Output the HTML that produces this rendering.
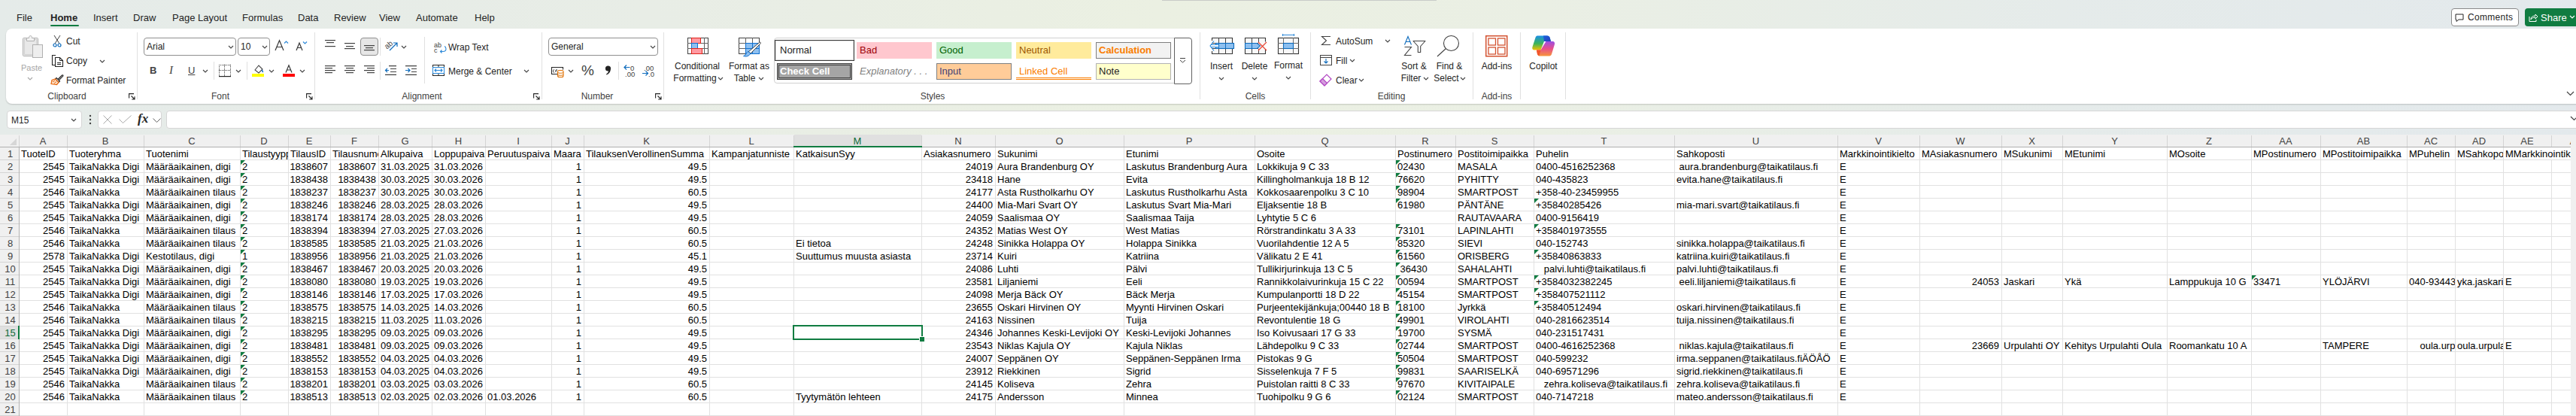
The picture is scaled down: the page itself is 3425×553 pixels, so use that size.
<!DOCTYPE html>
<html><head><meta charset="utf-8"><title>Excel</title>
<style>
html,body{margin:0;padding:0;}
body{width:3425px;height:553px;overflow:hidden;position:relative;font-family:"Liberation Sans", sans-serif;background:linear-gradient(90deg,#e5ebe9 0%,#e8ede6 25%,#ebf0e2 45%,#eaefe4 60%,#e5ebea 80%,#e3e9ec 100%);}
.t{position:absolute;white-space:pre;line-height:15px;}
.c{text-align:center;}
.b{position:absolute;}
.s{position:absolute;overflow:visible;}
.cl{position:absolute;height:16px;line-height:18px;font-size:13px;color:#000;white-space:pre;overflow:hidden;padding-left:2px;box-sizing:border-box;}
.cl.r{text-align:right;padding-left:0;}
.cl span{background:#fff;display:inline-block;height:16px;vertical-align:top;}
</style></head><body>

<div class="t" style="left:22px;top:16px;font-size:13px;color:#242424;font-weight:normal;">File</div><div class="t" style="left:67px;top:16px;font-size:13px;color:#242424;font-weight:bold;">Home</div><div class="t" style="left:124px;top:16px;font-size:13px;color:#242424;font-weight:normal;">Insert</div><div class="t" style="left:177px;top:16px;font-size:13px;color:#242424;font-weight:normal;">Draw</div><div class="t" style="left:229px;top:16px;font-size:13px;color:#242424;font-weight:normal;">Page Layout</div><div class="t" style="left:322px;top:16px;font-size:13px;color:#242424;font-weight:normal;">Formulas</div><div class="t" style="left:396px;top:16px;font-size:13px;color:#242424;font-weight:normal;">Data</div><div class="t" style="left:444px;top:16px;font-size:13px;color:#242424;font-weight:normal;">Review</div><div class="t" style="left:504px;top:16px;font-size:13px;color:#242424;font-weight:normal;">View</div><div class="t" style="left:553px;top:16px;font-size:13px;color:#242424;font-weight:normal;">Automate</div><div class="t" style="left:631px;top:16px;font-size:13px;color:#242424;font-weight:normal;">Help</div><div class="b" style="left:67px;top:33px;width:38px;height:2px;background:#107c41;border-radius:1px"></div><div class="b" style="left:1545px;top:0px;width:365px;height:1px;background:#c8cbc8"></div><div class="b" style="left:3259px;top:11px;width:90px;height:24px;background:#fff;border:1px solid #8a8a8a;border-radius:4px;box-sizing:border-box"></div><svg class="s" style="left:3264px;top:18px" width="12" height="11" viewBox="0 0 12 11"><path d="M1 1h10v7H5l-3 2.5V8H1z" fill="none" stroke="#242424" stroke-width="1"/></svg><div class="t" style="left:3281px;top:16px;font-size:12px;color:#242424;font-weight:normal;letter-spacing:0.3px;">Comments</div><div class="b" style="left:3357px;top:11px;width:80px;height:24px;background:#107c41;border-radius:4px"></div><svg class="s" style="left:3362px;top:17px" width="13" height="12" viewBox="0 0 13 12"><path d="M1 5v6.5h9V9" fill="none" stroke="#fff" stroke-width="1"/><path d="M3 9c0-3 2-5 6-5V2l3 3-3 3V6C6 6 4 7 3 9z" fill="none" stroke="#fff" stroke-width="1"/></svg><div class="t" style="left:3378px;top:16px;font-size:13px;color:#fff;font-weight:normal;">Share</div><svg class="s" style="left:3416px;top:20px" width="8" height="6" viewBox="0 0 8 6"><path d="M1 1l3 3 3-3" fill="none" stroke="#fff" stroke-width="1.2"/></svg><div class="b" style="left:8px;top:38px;width:3425px;height:100px;background:#fff;border-radius:8px;box-shadow:0 1px 2px rgba(0,0,0,0.18)"></div><svg class="s" style="left:30px;top:47px" width="28" height="31" viewBox="0 0 28 31"><rect x="0.5" y="3.5" width="20" height="24" rx="1" fill="#e8e8e8" stroke="#b0b0b0"/><rect x="2.5" y="5.5" width="16" height="20" fill="none" stroke="#d0d0d0"/><path d="M5.5 7.5v-4h3c0-2 1-3 2-3s2 1 2 3h3v4z" fill="#f2f2f2" stroke="#b0b0b0"/><rect x="13.5" y="12.5" width="13" height="17" fill="#eeeeee" stroke="#b0b0b0"/></svg><div class="t" style="left:28px;top:83px;font-size:11px;color:#a6a6a6;font-weight:normal;">Paste</div><svg class="s" style="left:36px;top:102px" width="8" height="5" viewBox="0 0 8 5"><path d="M1 1l3 3 3-3" fill="none" stroke="#a6a6a6" stroke-width="1.1"/></svg><svg class="s" style="left:70px;top:46px" width="12" height="17" viewBox="0 0 12 17"><path d="M2 1l7 11M10 1L3 12" fill="none" stroke="#424242" stroke-width="1"/><circle cx="3" cy="14" r="2" fill="none" stroke="#0f6cbd" stroke-width="1.2"/><circle cx="9" cy="14" r="2" fill="none" stroke="#0f6cbd" stroke-width="1.2"/></svg><div class="t" style="left:88px;top:48px;font-size:12px;color:#242424;font-weight:normal;">Cut</div><svg class="s" style="left:68px;top:72px" width="17" height="17" viewBox="0 0 17 17"><path d="M6 1.5H1.5v13H5" fill="none" stroke="#242424" stroke-width="1.1"/><path d="M5.5 4.5h6l4 4v8h-10z" fill="#fff" stroke="#242424" stroke-width="1.1"/><path d="M11.5 4.5v4h4" fill="none" stroke="#242424" stroke-width="1"/><path d="M8 11.5h5M8 13.5h5" stroke="#242424" stroke-width="1"/></svg><div class="t" style="left:88px;top:74px;font-size:12px;color:#242424;font-weight:normal;">Copy</div><svg class="s" style="left:132px;top:79px" width="8" height="5" viewBox="0 0 8 5"><path d="M1 1l3 3 3-3" fill="none" stroke="#424242" stroke-width="1.1"/></svg><svg class="s" style="left:67px;top:97px" width="18" height="16" viewBox="0 0 18 16"><path d="M10 8.5l5.5-5.5c0.8-0.8 2 0.4 1.2 1.2L11 10" fill="#fff" stroke="#242424" stroke-width="1.1"/><path d="M8 6.5l4.5 4.5-1.5 1.5L6.5 8z" fill="#fff" stroke="#242424" stroke-width="1.1"/><path d="M6.5 8l4.5 4.5-2.5 3L1 14.5l1-5z" fill="#fde3cc" stroke="#e8650a" stroke-width="1.2"/><path d="M3 12l3-2M5 14l3-2.5" stroke="#e8650a" stroke-width="1"/></svg><div class="t" style="left:88px;top:100px;font-size:12px;color:#242424;font-weight:normal;">Format Painter</div><div class="t c" style="left:29px;width:120px;top:121px;font-size:12px;color:#424242">Clipboard</div><svg class="s" style="left:171px;top:124px" width="9" height="9" viewBox="0 0 9 9"><path d="M0.6 6.5V0.6H7" fill="none" stroke="#242424" stroke-width="1.1"/><path d="M3.5 3.5l4.5 4.5M8 4.2V8H4.2" fill="none" stroke="#242424" stroke-width="1.1"/></svg><div class="b" style="left:182px;top:43px;width:1px;height:89px;background:#e0e0e0"></div><div class="b" style="left:191px;top:50px;width:123px;height:24px;border:1px solid #8f8f8f;border-radius:4px;box-sizing:border-box;background:#fff"></div><div class="t" style="left:195px;top:55px;font-size:12px;color:#242424;font-weight:normal;">Arial</div><svg class="s" style="left:303px;top:60px" width="8" height="5" viewBox="0 0 8 5"><path d="M1 1l3 3 3-3" fill="none" stroke="#424242" stroke-width="1.1"/></svg><div class="b" style="left:316px;top:50px;width:43px;height:24px;border:1px solid #8f8f8f;border-radius:4px;box-sizing:border-box;background:#fff"></div><div class="t" style="left:320px;top:55px;font-size:12px;color:#242424;font-weight:normal;">10</div><svg class="s" style="left:348px;top:60px" width="8" height="5" viewBox="0 0 8 5"><path d="M1 1l3 3 3-3" fill="none" stroke="#424242" stroke-width="1.1"/></svg><svg class="s" style="left:365px;top:53px" width="21" height="15" viewBox="0 0 21 15"><path d="M1 14L6.5 0.8 12 14M3 9.5h7" fill="none" stroke="#363636" stroke-width="1.2"/><path d="M13 4.5l2.5-2.5 2.5 2.5" fill="none" stroke="#2b88d8" stroke-width="1.2"/></svg><svg class="s" style="left:393px;top:54px" width="17" height="14" viewBox="0 0 17 14"><path d="M1 13L5 3 9 13M2.5 9.5h5" fill="none" stroke="#363636" stroke-width="1.2"/><path d="M10 1.5l2.5 2.5 2.5-2.5" fill="none" stroke="#2b88d8" stroke-width="1.2"/></svg><div class="t" style="left:199px;top:86px;font-size:13px;color:#424242;font-weight:bold;">B</div><div class="t" style="left:225px;top:86px;font-size:15px;color:#424242;font-weight:normal;font-style:italic;font-family:'Liberation Serif',serif;">I</div><div class="t" style="left:250px;top:86px;font-size:13px;color:#424242;font-weight:normal;text-decoration:underline;">U</div><svg class="s" style="left:269px;top:92px" width="8" height="5" viewBox="0 0 8 5"><path d="M1 1l3 3 3-3" fill="none" stroke="#424242" stroke-width="1.1"/></svg><div class="b" style="left:284px;top:82px;width:1px;height:24px;background:#e0e0e0"></div><svg class="s" style="left:291px;top:86px" width="16" height="16" viewBox="0 0 16 16"><rect x="0" y="0" width="1" height="1" fill="#424242"/><rect x="0" y="0" width="1" height="1" fill="#424242"/><rect x="15" y="0" width="1" height="1" fill="#424242"/><rect x="7" y="0" width="1" height="1" fill="#424242"/><rect x="0" y="7" width="1" height="1" fill="#424242"/><rect x="2" y="0" width="1" height="1" fill="#424242"/><rect x="0" y="2" width="1" height="1" fill="#424242"/><rect x="15" y="2" width="1" height="1" fill="#424242"/><rect x="7" y="2" width="1" height="1" fill="#424242"/><rect x="2" y="7" width="1" height="1" fill="#424242"/><rect x="4" y="0" width="1" height="1" fill="#424242"/><rect x="0" y="4" width="1" height="1" fill="#424242"/><rect x="15" y="4" width="1" height="1" fill="#424242"/><rect x="7" y="4" width="1" height="1" fill="#424242"/><rect x="4" y="7" width="1" height="1" fill="#424242"/><rect x="6" y="0" width="1" height="1" fill="#424242"/><rect x="0" y="6" width="1" height="1" fill="#424242"/><rect x="15" y="6" width="1" height="1" fill="#424242"/><rect x="7" y="6" width="1" height="1" fill="#424242"/><rect x="6" y="7" width="1" height="1" fill="#424242"/><rect x="8" y="0" width="1" height="1" fill="#424242"/><rect x="0" y="8" width="1" height="1" fill="#424242"/><rect x="15" y="8" width="1" height="1" fill="#424242"/><rect x="7" y="8" width="1" height="1" fill="#424242"/><rect x="8" y="7" width="1" height="1" fill="#424242"/><rect x="10" y="0" width="1" height="1" fill="#424242"/><rect x="0" y="10" width="1" height="1" fill="#424242"/><rect x="15" y="10" width="1" height="1" fill="#424242"/><rect x="7" y="10" width="1" height="1" fill="#424242"/><rect x="10" y="7" width="1" height="1" fill="#424242"/><rect x="12" y="0" width="1" height="1" fill="#424242"/><rect x="0" y="12" width="1" height="1" fill="#424242"/><rect x="15" y="12" width="1" height="1" fill="#424242"/><rect x="7" y="12" width="1" height="1" fill="#424242"/><rect x="12" y="7" width="1" height="1" fill="#424242"/><rect x="14" y="0" width="1" height="1" fill="#424242"/><rect x="0" y="14" width="1" height="1" fill="#424242"/><rect x="15" y="14" width="1" height="1" fill="#424242"/><rect x="7" y="14" width="1" height="1" fill="#424242"/><rect x="14" y="7" width="1" height="1" fill="#424242"/><rect x="0" y="15" width="16" height="1.2" fill="#242424"/></svg><svg class="s" style="left:313px;top:92px" width="8" height="5" viewBox="0 0 8 5"><path d="M1 1l3 3 3-3" fill="none" stroke="#424242" stroke-width="1.1"/></svg><div class="b" style="left:328px;top:82px;width:1px;height:24px;background:#e0e0e0"></div><svg class="s" style="left:335px;top:84px" width="17" height="19" viewBox="0 0 17 19"><path d="M4 9l5-6 5 5-5 5z" fill="none" stroke="#424242" stroke-width="1.1"/><path d="M13 9c1 1 2 2 1 3" fill="none" stroke="#0f6cbd" stroke-width="1.5"/><rect x="0" y="14" width="16" height="4" fill="#ffff00"/></svg><svg class="s" style="left:357px;top:92px" width="8" height="5" viewBox="0 0 8 5"><path d="M1 1l3 3 3-3" fill="none" stroke="#424242" stroke-width="1.1"/></svg><svg class="s" style="left:379px;top:86px" width="11" height="11" viewBox="0 0 11 11"><path d="M1 10.5L5 0.8 9 10.5M2.5 7h5" fill="none" stroke="#363636" stroke-width="1.2"/></svg><div class="b" style="left:376px;top:98px;width:16px;height:4px;background:#ff0000"></div><svg class="s" style="left:398px;top:92px" width="8" height="5" viewBox="0 0 8 5"><path d="M1 1l3 3 3-3" fill="none" stroke="#424242" stroke-width="1.1"/></svg><div class="t c" style="left:233px;width:120px;top:121px;font-size:12px;color:#424242">Font</div><svg class="s" style="left:407px;top:124px" width="9" height="9" viewBox="0 0 9 9"><path d="M0.6 6.5V0.6H7" fill="none" stroke="#242424" stroke-width="1.1"/><path d="M3.5 3.5l4.5 4.5M8 4.2V8H4.2" fill="none" stroke="#242424" stroke-width="1.1"/></svg><div class="b" style="left:418px;top:43px;width:1px;height:89px;background:#e0e0e0"></div><svg class="s" style="left:432px;top:53px" width="14" height="6" viewBox="0 0 14 6"><rect x="0.0" y="0" width="14" height="1.2" fill="#424242"/><rect x="2.0" y="3" width="10" height="1.2" fill="#424242"/></svg><svg class="s" style="left:432px;top:61px" width="14" height="2" viewBox="0 0 14 2"><rect x="0" y="0" width="14" height="1.2" fill="#424242"/></svg><svg class="s" style="left:458px;top:57px" width="14" height="3" viewBox="0 0 14 3"><rect x="0.0" y="0" width="14" height="1.2" fill="#424242"/></svg><svg class="s" style="left:458px;top:61px" width="14" height="6" viewBox="0 0 14 6"><rect x="2.0" y="0" width="10" height="1.2" fill="#424242"/><rect x="0.0" y="3" width="14" height="1.2" fill="#424242"/></svg><div class="b" style="left:479px;top:50px;width:24px;height:24px;background:#e6e6e6;border:1px solid #8f8f8f;border-radius:4px;box-sizing:border-box"></div><svg class="s" style="left:484px;top:60px" width="14" height="9" viewBox="0 0 14 9"><rect x="0.0" y="0" width="14" height="1.2" fill="#424242"/><rect x="2.0" y="3" width="10" height="1.2" fill="#424242"/><rect x="0.0" y="6" width="14" height="1.2" fill="#424242"/></svg><div class="b" style="left:505px;top:50px;width:1px;height:24px;background:#e0e0e0"></div><div class="t" style="left:511px;top:52px;font-size:10px;color:#424242;font-weight:normal;transform:rotate(-40deg);">ab</div><svg class="s" style="left:517px;top:56px" width="12" height="12" viewBox="0 0 12 12"><path d="M1 11L11 1M6 1h5v5" fill="none" stroke="#0f6cbd" stroke-width="1.2"/></svg><svg class="s" style="left:533px;top:60px" width="8" height="5" viewBox="0 0 8 5"><path d="M1 1l3 3 3-3" fill="none" stroke="#424242" stroke-width="1.1"/></svg><svg class="s" style="left:432px;top:87px" width="14" height="12" viewBox="0 0 14 12"><rect x="0" y="0" width="14" height="1.2" fill="#424242"/><rect x="0" y="3" width="10" height="1.2" fill="#424242"/><rect x="0" y="6" width="14" height="1.2" fill="#424242"/><rect x="0" y="9" width="10" height="1.2" fill="#424242"/></svg><svg class="s" style="left:458px;top:87px" width="14" height="12" viewBox="0 0 14 12"><rect x="0.0" y="0" width="14" height="1.2" fill="#424242"/><rect x="2.0" y="3" width="10" height="1.2" fill="#424242"/><rect x="0.0" y="6" width="14" height="1.2" fill="#424242"/><rect x="2.0" y="9" width="10" height="1.2" fill="#424242"/></svg><svg class="s" style="left:484px;top:87px" width="14" height="12" viewBox="0 0 14 12"><rect x="0" y="0" width="14" height="1.2" fill="#424242"/><rect x="4" y="3" width="10" height="1.2" fill="#424242"/><rect x="0" y="6" width="14" height="1.2" fill="#424242"/><rect x="4" y="9" width="10" height="1.2" fill="#424242"/></svg><div class="b" style="left:505px;top:82px;width:1px;height:24px;background:#e0e0e0"></div><svg class="s" style="left:512px;top:87px" width="15" height="13" viewBox="0 0 15 13"><path d="M5 0.6h10M7 4.5h8M7 8.5h8M0 12.4h15" stroke="#424242" stroke-width="1.2"/><path d="M5 6.5H0.5M3 4l-2.5 2.5L3 9" fill="none" stroke="#0f6cbd" stroke-width="1.2"/></svg><svg class="s" style="left:539px;top:87px" width="15" height="13" viewBox="0 0 15 13"><path d="M0 0.6h15M8 4.5h7M8 8.5h7M0 12.4h15" stroke="#424242" stroke-width="1.2"/><path d="M0 6.5h6M3.5 4L6 6.5 3.5 9" fill="none" stroke="#0f6cbd" stroke-width="1.2"/></svg><div class="b" style="left:564px;top:49px;width:1px;height:62px;background:#e0e0e0"></div><div class="t" style="left:577px;top:53px;font-size:9px;color:#424242;font-weight:normal;">ab</div><div class="t" style="left:577px;top:60px;font-size:9px;color:#424242;font-weight:normal;">c</div><svg class="s" style="left:583px;top:61px" width="11" height="9" viewBox="0 0 11 9"><path d="M2.5 7.5h3.5c2.5 0 4-1.5 4-3.5S9 1 8 0.5M4.5 5.5l-2 2 2 2" fill="none" stroke="#2b88d8" stroke-width="1.1"/></svg><div class="t" style="left:596px;top:56px;font-size:12px;color:#242424;font-weight:normal;">Wrap Text</div><svg class="s" style="left:575px;top:86px" width="16" height="15" viewBox="0 0 16 15"><rect x="0.5" y="0.5" width="15" height="14" fill="#fff" stroke="#242424"/><path d="M8 0v4M8 11v4" stroke="#242424"/><rect x="0.5" y="3.5" width="15" height="8" fill="#fff" stroke="#2b88d8"/><path d="M3 7.5h10M5 5.5l-2 2 2 2M11 5.5l2 2-2 2" fill="none" stroke="#2b88d8" stroke-width="1.1"/></svg><div class="t" style="left:596px;top:88px;font-size:12px;color:#242424;font-weight:normal;">Merge &amp; Center</div><svg class="s" style="left:696px;top:92px" width="8" height="5" viewBox="0 0 8 5"><path d="M1 1l3 3 3-3" fill="none" stroke="#424242" stroke-width="1.1"/></svg><div class="t c" style="left:501px;width:120px;top:121px;font-size:12px;color:#424242">Alignment</div><svg class="s" style="left:709px;top:124px" width="9" height="9" viewBox="0 0 9 9"><path d="M0.6 6.5V0.6H7" fill="none" stroke="#242424" stroke-width="1.1"/><path d="M3.5 3.5l4.5 4.5M8 4.2V8H4.2" fill="none" stroke="#242424" stroke-width="1.1"/></svg><div class="b" style="left:720px;top:43px;width:1px;height:89px;background:#e0e0e0"></div><div class="b" style="left:729px;top:50px;width:146px;height:24px;border:1px solid #8f8f8f;border-radius:4px;box-sizing:border-box;background:#fff"></div><div class="t" style="left:733px;top:55px;font-size:12px;color:#242424;font-weight:normal;">General</div><svg class="s" style="left:864px;top:60px" width="8" height="5" viewBox="0 0 8 5"><path d="M1 1l3 3 3-3" fill="none" stroke="#424242" stroke-width="1.1"/></svg><svg class="s" style="left:733px;top:88px" width="17" height="15" viewBox="0 0 17 15"><path d="M8 10.5H0.5v-9h15v3" fill="none" stroke="#242424" stroke-width="1.1"/><path d="M4 4.5c-1 0.3-1.5 1-1.5 2s0.5 1.7 1.5 2M6 8V5h2" fill="none" stroke="#242424" stroke-width="1"/><rect x="8.5" y="5.5" width="7.5" height="9" rx="2" fill="#fff" stroke="#e07000" stroke-width="1.1"/><path d="M8.5 8.5c1 1 6.5 1 7.5 0M8.5 11.5c1 1 6.5 1 7.5 0" fill="none" stroke="#e07000" stroke-width="1"/></svg><svg class="s" style="left:755px;top:92px" width="8" height="5" viewBox="0 0 8 5"><path d="M1 1l3 3 3-3" fill="none" stroke="#424242" stroke-width="1.1"/></svg><div class="t" style="left:773px;top:86px;font-size:19px;color:#424242;font-weight:normal;">%</div><svg class="s" style="left:804px;top:87px" width="9" height="13" viewBox="0 0 9 13"><circle cx="4.5" cy="4" r="3.6" fill="#242424"/><path d="M7.6 5.5C7.8 8.5 6 11 2.5 12.5L2 11.5C4 10.3 5 8.8 5 7z" fill="#242424"/></svg><div class="b" style="left:822px;top:82px;width:1px;height:24px;background:#e0e0e0"></div><div class="t" style="left:838px;top:83px;font-size:9.5px;color:#424242;font-weight:normal;">0</div><div class="t" style="left:831px;top:91px;font-size:9.5px;color:#424242;font-weight:normal;">.00</div><svg class="s" style="left:829px;top:86px" width="9" height="8" viewBox="0 0 9 8"><path d="M8.5 3.5H1M4 0.5L1 3.5 4 6.5" fill="none" stroke="#0f6cbd" stroke-width="1.2"/></svg><div class="t" style="left:856px;top:83px;font-size:9.5px;color:#424242;font-weight:normal;">.00</div><div class="t" style="left:862px;top:91px;font-size:9.5px;color:#424242;font-weight:normal;">.0</div><svg class="s" style="left:854px;top:94px" width="9" height="8" viewBox="0 0 9 8"><path d="M0 3.5h7.5M4.5 0.5L7.5 3.5 4.5 6.5" fill="none" stroke="#0f6cbd" stroke-width="1.2"/></svg><div class="t c" style="left:734px;width:120px;top:121px;font-size:12px;color:#424242">Number</div><svg class="s" style="left:871px;top:124px" width="9" height="9" viewBox="0 0 9 9"><path d="M0.6 6.5V0.6H7" fill="none" stroke="#242424" stroke-width="1.1"/><path d="M3.5 3.5l4.5 4.5M8 4.2V8H4.2" fill="none" stroke="#242424" stroke-width="1.1"/></svg><div class="b" style="left:882px;top:43px;width:1px;height:89px;background:#e0e0e0"></div><svg class="s" style="left:914px;top:50px" width="28" height="22" viewBox="0 0 28 22"><rect x="0.5" y="0.5" width="27" height="21" fill="#fff" stroke="#424242"/><path d="M0 7.5h28M0 14.5h28M22.5 0v22" stroke="#616161"/><rect x="5.5" y="0.5" width="12" height="7" fill="#ff9aa2" stroke="#e0241b"/><rect x="5.5" y="7.5" width="8" height="7" fill="#8ec0f0" stroke="#1070d0"/><rect x="5.5" y="14.5" width="14" height="7" fill="#ff9aa2" stroke="#e0241b"/></svg><div class="t c" style="left:880px;width:94px;top:81px;font-size:12px;color:#242424">Conditional</div><div class="t c" style="left:874px;width:100px;top:97px;font-size:12px;color:#242424">Formatting</div><svg class="s" style="left:954px;top:102px" width="8" height="5" viewBox="0 0 8 5"><path d="M1 1l3 3 3-3" fill="none" stroke="#424242" stroke-width="1.1"/></svg><svg class="s" style="left:982px;top:50px" width="31" height="27" viewBox="0 0 31 27"><rect x="0.5" y="0.5" width="27" height="21" fill="#fff" stroke="#424242"/><path d="M0 7.5h28M0 14.5h28M9.5 0v22M18.5 0v22" stroke="#616161"/><rect x="9.5" y="7.5" width="18" height="14" fill="#8ec0f0" stroke="#1070d0"/><path d="M9.5 14.5h18M18.5 7.5v14" stroke="#1070d0"/><path d="M13 19L27.5 6.5c1-1 2.5 0 1.8 1.2L16 21z" fill="#fff" stroke="#424242" stroke-width="1"/><path d="M12.5 18.5c-2 1-2 3-3.5 4.5-0.8 0.8-2 1.2-2.5 1.5 3 1 6 0.5 8-1.5 1-1 1.5-2 1.5-2z" fill="#8ec0f0" stroke="#1070d0" stroke-width="1"/></svg><div class="t c" style="left:946px;width:100px;top:81px;font-size:12px;color:#242424">Format as</div><div class="t c" style="left:940px;width:100px;top:97px;font-size:12px;color:#242424">Table</div><svg class="s" style="left:1008px;top:102px" width="8" height="5" viewBox="0 0 8 5"><path d="M1 1l3 3 3-3" fill="none" stroke="#424242" stroke-width="1.1"/></svg><div class="b" style="left:1029px;top:50px;width:533px;height:61px;border:1px solid #d1d1d1;border-radius:4px 0 0 4px;box-sizing:border-box;background:#fff"></div><div class="b" style="left:1030px;top:53px;width:106px;height:28px;border:1px solid #3b3b3b;box-sizing:border-box;background:#fff;box-shadow:inset 0 0 0 1px #dcdcdc"></div><div class="t" style="left:1037px;top:59px;font-size:13px;color:#242424;font-weight:normal;">Normal</div><div class="b" style="left:1139px;top:56px;width:100px;height:22px;background:#ffc7ce"></div><div class="t" style="left:1143px;top:59px;font-size:13px;color:#9c0006;font-weight:normal;">Bad</div><div class="b" style="left:1245px;top:56px;width:100px;height:22px;background:#c6efce"></div><div class="t" style="left:1249px;top:59px;font-size:13px;color:#006100;font-weight:normal;">Good</div><div class="b" style="left:1351px;top:56px;width:100px;height:22px;background:#ffeb9c"></div><div class="t" style="left:1355px;top:59px;font-size:13px;color:#9c5700;font-weight:normal;">Neutral</div><div class="b" style="left:1457px;top:56px;width:100px;height:22px;background:#f2f2f2;border:1px solid #7f7f7f;box-sizing:border-box"></div><div class="t" style="left:1461px;top:59px;font-size:13px;color:#fa7d00;font-weight:bold;">Calculation</div><div class="b" style="left:1033px;top:84px;width:100px;height:22px;background:#a5a5a5;border:3px double #3f3f3f;box-sizing:border-box"></div><div class="t" style="left:1037px;top:87px;font-size:13px;color:#fff;font-weight:bold;">Check Cell</div><div class="t" style="left:1143px;top:87px;font-size:13px;color:#7f7f7f;font-weight:normal;font-style:italic;">Explanatory . . .</div><div class="b" style="left:1245px;top:84px;width:100px;height:22px;background:#ffcc99;border:1px solid #7f7f7f;box-sizing:border-box"></div><div class="t" style="left:1249px;top:87px;font-size:13px;color:#3f3f76;font-weight:normal;">Input</div><div class="t" style="left:1355px;top:87px;font-size:13px;color:#fa7d00;font-weight:normal;">Linked Cell</div><div class="b" style="left:1351px;top:103px;width:100px;height:3px;border-top:1px solid #fa7d00;border-bottom:1px solid #fa7d00;box-sizing:border-box"></div><div class="b" style="left:1457px;top:84px;width:100px;height:22px;background:#ffffcc;border:1px solid #b2b2b2;box-sizing:border-box"></div><div class="t" style="left:1461px;top:87px;font-size:13px;color:#242424;font-weight:normal;">Note</div><div class="b" style="left:1561px;top:50px;width:24px;height:62px;border:1px solid #616161;border-radius:0 4px 4px 0;box-sizing:border-box;background:#fff"></div><svg class="s" style="left:1568px;top:77px" width="9" height="7" viewBox="0 0 9 7"><path d="M1 0.5h7M1 3l3.5 3L8 3" fill="none" stroke="#424242" stroke-width="1"/></svg><div class="t c" style="left:1180px;width:120px;top:121px;font-size:12px;color:#424242">Styles</div><div class="b" style="left:1595px;top:43px;width:1px;height:89px;background:#e0e0e0"></div><svg class="s" style="left:1608px;top:50px" width="34" height="22" viewBox="0 0 34 22"><rect x="3.5" y="0.5" width="27" height="21" fill="#f8f8f8"/><path d="M3.5 4V0.5h27v21h-27V18" fill="none" stroke="#363636" stroke-width="1.1"/><path d="M12.5 0v7M21.5 0v7M12.5 15v7M21.5 15v7M3 7.5h28M3 14.5h28" stroke="#424242"/><rect x="8.5" y="7.5" width="24" height="7" fill="#8ec0f0" stroke="#0f6cbd" stroke-width="1.1"/><path d="M21.5 7.5v7M12.5 7.5v7" stroke="#0f6cbd"/><path d="M6 4.5L1 11l5 6.5M2 9.5h11M2 12.5h11" fill="none" stroke="#2b88d8" stroke-width="1.1"/><rect x="3" y="10" width="9" height="2" fill="#fff"/></svg><div class="t c" style="left:1584px;width:80px;top:81px;font-size:12px;color:#242424">Insert</div><svg class="s" style="left:1620px;top:102px" width="8" height="5" viewBox="0 0 8 5"><path d="M1 1l3 3 3-3" fill="none" stroke="#424242" stroke-width="1.1"/></svg><svg class="s" style="left:1655px;top:50px" width="31" height="22" viewBox="0 0 31 22"><rect x="0.5" y="0.5" width="27" height="21" fill="#f8f8f8"/><path d="M0.5 7V0.5h27v5M27.5 16v5.5h-27V15" fill="none" stroke="#363636" stroke-width="1.1"/><path d="M9.5 0v7M18.5 0v7M9.5 15v7M18.5 15v7M0 7.5h18M0 14.5h18" stroke="#424242"/><path d="M0.5 7.5h16l4 3.5-4 3.5h-16z" fill="#8ec0f0" stroke="#0f6cbd" stroke-width="1.1"/><path d="M9.5 7.5v7" stroke="#0f6cbd"/><path d="M18 6l11 11M29 6L18 17" stroke="#e8412f" stroke-width="1.1"/></svg><div class="t c" style="left:1628px;width:80px;top:81px;font-size:12px;color:#242424">Delete</div><svg class="s" style="left:1664px;top:102px" width="8" height="5" viewBox="0 0 8 5"><path d="M1 1l3 3 3-3" fill="none" stroke="#424242" stroke-width="1.1"/></svg><svg class="s" style="left:1699px;top:44px" width="28" height="28" viewBox="0 0 28 28"><path d="M6.5 2.5h15M6.5 1v3M21.5 1v3" stroke="#2b88d8" stroke-width="1.1"/><rect x="0.5" y="6.5" width="27" height="21" fill="#f8f8f8" stroke="#363636" stroke-width="1.1"/><path d="M0 13.5h28M0 20.5h28M7.5 6v22M20.5 6v22" stroke="#6b6b6b"/><rect x="7.5" y="13.5" width="13" height="7" fill="#8ec0f0" stroke="#0f6cbd" stroke-width="1.1"/></svg><div class="t c" style="left:1673px;width:80px;top:80px;font-size:12px;color:#242424">Format</div><svg class="s" style="left:1709px;top:101px" width="8" height="5" viewBox="0 0 8 5"><path d="M1 1l3 3 3-3" fill="none" stroke="#424242" stroke-width="1.1"/></svg><div class="t c" style="left:1609px;width:120px;top:121px;font-size:12px;color:#424242">Cells</div><div class="b" style="left:1742px;top:43px;width:1px;height:89px;background:#e0e0e0"></div><svg class="s" style="left:1756px;top:47px" width="14" height="14" viewBox="0 0 14 14"><path d="M13 1.5H1.5l6 5.5-6 5.5H13" fill="none" stroke="#424242" stroke-width="1.1"/></svg><div class="t" style="left:1776px;top:48px;font-size:12px;color:#242424;font-weight:normal;">AutoSum</div><svg class="s" style="left:1841px;top:52px" width="8" height="5" viewBox="0 0 8 5"><path d="M1 1l3 3 3-3" fill="none" stroke="#424242" stroke-width="1.1"/></svg><svg class="s" style="left:1755px;top:73px" width="16" height="14" viewBox="0 0 16 14"><rect x="0.5" y="0.5" width="15" height="13" fill="none" stroke="#424242"/><path d="M0 3.5h16" stroke="#424242"/><path d="M8 5v6M5.5 8.5L8 11l2.5-2.5" fill="none" stroke="#0f6cbd" stroke-width="1.1"/></svg><div class="t" style="left:1776px;top:74px;font-size:12px;color:#242424;font-weight:normal;">Fill</div><svg class="s" style="left:1794px;top:78px" width="8" height="5" viewBox="0 0 8 5"><path d="M1 1l3 3 3-3" fill="none" stroke="#424242" stroke-width="1.1"/></svg><svg class="s" style="left:1754px;top:97px" width="17" height="17" viewBox="0 0 17 17"><path d="M1 11l9-9 6 6-9 9z" fill="#fff" stroke="#b146c2" stroke-width="1.2"/><path d="M1 11l3.5-3.5 6 6L7 17z" fill="#d59dde" stroke="#b146c2" stroke-width="1.2"/></svg><div class="t" style="left:1776px;top:100px;font-size:12px;color:#242424;font-weight:normal;">Clear</div><svg class="s" style="left:1806px;top:104px" width="8" height="5" viewBox="0 0 8 5"><path d="M1 1l3 3 3-3" fill="none" stroke="#424242" stroke-width="1.1"/></svg><svg class="s" style="left:1867px;top:48px" width="30" height="26" viewBox="0 0 30 26"><path d="M0.5 11.5L5 0.5l4.5 11M2 7.5h6" fill="none" stroke="#0f6cbd" stroke-width="1.1"/><path d="M0.5 14.5h9L0.5 25.5h9" fill="none" stroke="#424242" stroke-width="1.1"/><path d="M12 6.5h16l-6.3 7v8h-3.4v-8z" fill="#fff" stroke="#424242" stroke-width="1.1" stroke-linejoin="round"/></svg><div class="t c" style="left:1840px;width:80px;top:81px;font-size:12px;color:#242424">Sort &amp;</div><div class="t c" style="left:1836px;width:80px;top:97px;font-size:12px;color:#242424">Filter</div><svg class="s" style="left:1892px;top:102px" width="8" height="5" viewBox="0 0 8 5"><path d="M1 1l3 3 3-3" fill="none" stroke="#424242" stroke-width="1.1"/></svg><svg class="s" style="left:1910px;top:46px" width="32" height="30" viewBox="0 0 32 30"><circle cx="19.5" cy="11.5" r="10" fill="none" stroke="#424242" stroke-width="1.1"/><path d="M12.5 18.5L1 29" stroke="#424242" stroke-width="1.1"/></svg><div class="t c" style="left:1887px;width:80px;top:81px;font-size:12px;color:#242424">Find &amp;</div><div class="t c" style="left:1883px;width:80px;top:97px;font-size:12px;color:#242424">Select</div><svg class="s" style="left:1941px;top:102px" width="8" height="5" viewBox="0 0 8 5"><path d="M1 1l3 3 3-3" fill="none" stroke="#424242" stroke-width="1.1"/></svg><div class="t c" style="left:1790px;width:120px;top:121px;font-size:12px;color:#424242">Editing</div><div class="b" style="left:1958px;top:43px;width:1px;height:89px;background:#e0e0e0"></div><svg class="s" style="left:1975px;top:47px" width="30" height="29" viewBox="0 0 30 29"><rect x="0.75" y="0.75" width="28" height="27" fill="none" stroke="#d35230" stroke-width="1.5"/><rect x="4" y="4" width="9.5" height="9" fill="none" stroke="#d35230" stroke-width="1.3"/><rect x="16.5" y="4" width="9.5" height="9" fill="none" stroke="#d35230" stroke-width="1.3"/><rect x="4" y="16" width="9.5" height="9" fill="none" stroke="#d35230" stroke-width="1.3"/><rect x="16.5" y="16" width="9.5" height="9" fill="none" stroke="#d35230" stroke-width="1.3"/></svg><div class="t c" style="left:1950px;width:80px;top:81px;font-size:12px;color:#242424">Add-ins</div><div class="t c" style="left:1930px;width:120px;top:121px;font-size:12px;color:#424242">Add-ins</div><div class="b" style="left:2021px;top:43px;width:1px;height:89px;background:#e0e0e0"></div><svg class="s" style="left:2037px;top:47px" width="31" height="28" viewBox="0 0 31 28"><defs><linearGradient id="cg1" x1="0" y1="0" x2="0" y2="1"><stop offset="0" stop-color="#1a8fe8"/><stop offset="0.55" stop-color="#3cb45a"/><stop offset="1" stop-color="#f5c000"/></linearGradient><linearGradient id="cg2" x1="0" y1="0" x2="0" y2="1"><stop offset="0" stop-color="#9b4ee6"/><stop offset="0.5" stop-color="#e8508a"/><stop offset="1" stop-color="#f7943a"/></linearGradient><linearGradient id="cg3" x1="0" y1="0" x2="1" y2="1"><stop offset="0" stop-color="#1e5fd8"/><stop offset="1" stop-color="#2440c0"/></linearGradient></defs><path d="M7 0.5H20c2 0 3.2 1.2 3.8 3L25 8H16l-4.5 11.5H3c-2 0-3.2-1.8-2.6-3.8L4.5 3C5 1.5 5.8 0.5 7 0.5z" fill="url(#cg1)"/><path d="M15 0.5h5c2 0 3.2 1.2 3.8 3L25 8h-9z" fill="url(#cg3)"/><path d="M18.5 8H27.5c2 0 3 1.8 2.5 3.8L26 25c-0.5 1.5-1.5 2.5-3 2.5H10c-1.5 0-2.5-1-3-2.5L6 19.5h5.5z" fill="url(#cg2)"/><path d="M6 19.5h5.5L9.5 27.3C8.5 27 7.5 26 7 25z" fill="#f2562a"/></svg><div class="t c" style="left:2012px;width:80px;top:81px;font-size:12px;color:#242424">Copilot</div><div class="b" style="left:2081px;top:43px;width:1px;height:89px;background:#e0e0e0"></div><svg class="s" style="left:3412px;top:121px" width="11" height="7" viewBox="0 0 11 7"><path d="M1 1l4.5 4.5L10 1" fill="none" stroke="#424242" stroke-width="1.2"/></svg><div class="b" style="left:9px;top:147px;width:100px;height:24px;background:#fff;border:1px solid #d6d6d6;border-radius:4px;box-sizing:border-box"></div><div class="t" style="left:15px;top:153px;font-size:12px;color:#242424;font-weight:normal;">M15</div><svg class="s" style="left:94px;top:157px" width="8" height="5" viewBox="0 0 8 5"><path d="M1 1l3 3 3-3" fill="none" stroke="#424242" stroke-width="1.1"/></svg><svg class="s" style="left:118px;top:152px" width="4" height="14" viewBox="0 0 4 14"><circle cx="2" cy="2" r="1.2" fill="#424242"/><circle cx="2" cy="7" r="1.2" fill="#424242"/><circle cx="2" cy="12" r="1.2" fill="#424242"/></svg><div class="b" style="left:130px;top:147px;width:85px;height:24px;background:#fff;border:1px solid #d6d6d6;border-radius:4px;box-sizing:border-box"></div><svg class="s" style="left:137px;top:153px" width="12" height="12" viewBox="0 0 12 12"><path d="M0.5 0.5l11 11M11.5 0.5l-11 11" stroke="#a8a8a8" stroke-width="1"/></svg><svg class="s" style="left:158px;top:153px" width="17" height="11" viewBox="0 0 17 11"><path d="M0.5 5.5l5 5 11-10" fill="none" stroke="#a8a8a8" stroke-width="1"/></svg><div class="t" style="left:183px;top:150px;font-size:17px;color:#242424;font-weight:bold;font-family:'Liberation Serif',serif;font-style:italic;">fx</div><svg class="s" style="left:203px;top:157px" width="11" height="6" viewBox="0 0 11 6"><path d="M0.5 0.5l5 5 5-5" fill="none" stroke="#616161" stroke-width="1"/></svg><div class="b" style="left:221px;top:147px;width:3210px;height:24px;background:#fff;border:1px solid #d6d6d6;border-radius:4px;box-sizing:border-box"></div><svg class="s" style="left:3417px;top:154px" width="11" height="7" viewBox="0 0 11 7"><path d="M1 1l4.5 4.5L10 1" fill="none" stroke="#424242" stroke-width="1.2"/></svg><div class="b" style="left:0px;top:179px;width:3418px;height:374px;background:#fff"></div><div class="b" style="left:3418px;top:179px;width:7px;height:374px;background:#f0f0f0"></div><div class="b" style="left:0px;top:179px;width:3418px;height:16px;background:#f0f0f0"></div><div class="b" style="left:0px;top:179px;width:25px;height:374px;background:#f0f0f0"></div><div class="b" style="left:1056px;top:179px;width:169px;height:16px;background:#e0e0e0"></div><div class="b" style="left:0px;top:433px;width:25px;height:17px;background:#e0e0e0"></div><svg class="s" style="left:13px;top:184px" width="10" height="9" viewBox="0 0 10 9"><path d="M9 0v9H0z" fill="#d6d6d6"/></svg><div class="b" style="left:0px;top:212px;width:25px;height:1px;background:#d4d4d4"></div><div class="b" style="left:26px;top:212px;width:3392px;height:1px;background:#e1e1e1"></div><div class="b" style="left:0px;top:229px;width:25px;height:1px;background:#d4d4d4"></div><div class="b" style="left:26px;top:229px;width:3392px;height:1px;background:#e1e1e1"></div><div class="b" style="left:0px;top:246px;width:25px;height:1px;background:#d4d4d4"></div><div class="b" style="left:26px;top:246px;width:3392px;height:1px;background:#e1e1e1"></div><div class="b" style="left:0px;top:263px;width:25px;height:1px;background:#d4d4d4"></div><div class="b" style="left:26px;top:263px;width:3392px;height:1px;background:#e1e1e1"></div><div class="b" style="left:0px;top:280px;width:25px;height:1px;background:#d4d4d4"></div><div class="b" style="left:26px;top:280px;width:3392px;height:1px;background:#e1e1e1"></div><div class="b" style="left:0px;top:297px;width:25px;height:1px;background:#d4d4d4"></div><div class="b" style="left:26px;top:297px;width:3392px;height:1px;background:#e1e1e1"></div><div class="b" style="left:0px;top:314px;width:25px;height:1px;background:#d4d4d4"></div><div class="b" style="left:26px;top:314px;width:3392px;height:1px;background:#e1e1e1"></div><div class="b" style="left:0px;top:331px;width:25px;height:1px;background:#d4d4d4"></div><div class="b" style="left:26px;top:331px;width:3392px;height:1px;background:#e1e1e1"></div><div class="b" style="left:0px;top:348px;width:25px;height:1px;background:#d4d4d4"></div><div class="b" style="left:26px;top:348px;width:3392px;height:1px;background:#e1e1e1"></div><div class="b" style="left:0px;top:365px;width:25px;height:1px;background:#d4d4d4"></div><div class="b" style="left:26px;top:365px;width:3392px;height:1px;background:#e1e1e1"></div><div class="b" style="left:0px;top:382px;width:25px;height:1px;background:#d4d4d4"></div><div class="b" style="left:26px;top:382px;width:3392px;height:1px;background:#e1e1e1"></div><div class="b" style="left:0px;top:399px;width:25px;height:1px;background:#d4d4d4"></div><div class="b" style="left:26px;top:399px;width:3392px;height:1px;background:#e1e1e1"></div><div class="b" style="left:0px;top:416px;width:25px;height:1px;background:#d4d4d4"></div><div class="b" style="left:26px;top:416px;width:3392px;height:1px;background:#e1e1e1"></div><div class="b" style="left:0px;top:433px;width:25px;height:1px;background:#d4d4d4"></div><div class="b" style="left:26px;top:433px;width:3392px;height:1px;background:#e1e1e1"></div><div class="b" style="left:0px;top:450px;width:25px;height:1px;background:#d4d4d4"></div><div class="b" style="left:26px;top:450px;width:3392px;height:1px;background:#e1e1e1"></div><div class="b" style="left:0px;top:467px;width:25px;height:1px;background:#d4d4d4"></div><div class="b" style="left:26px;top:467px;width:3392px;height:1px;background:#e1e1e1"></div><div class="b" style="left:0px;top:484px;width:25px;height:1px;background:#d4d4d4"></div><div class="b" style="left:26px;top:484px;width:3392px;height:1px;background:#e1e1e1"></div><div class="b" style="left:0px;top:501px;width:25px;height:1px;background:#d4d4d4"></div><div class="b" style="left:26px;top:501px;width:3392px;height:1px;background:#e1e1e1"></div><div class="b" style="left:0px;top:518px;width:25px;height:1px;background:#d4d4d4"></div><div class="b" style="left:26px;top:518px;width:3392px;height:1px;background:#e1e1e1"></div><div class="b" style="left:0px;top:535px;width:25px;height:1px;background:#d4d4d4"></div><div class="b" style="left:26px;top:535px;width:3392px;height:1px;background:#e1e1e1"></div><div class="b" style="left:0px;top:552px;width:25px;height:1px;background:#d4d4d4"></div><div class="b" style="left:26px;top:552px;width:3392px;height:1px;background:#e1e1e1"></div><div class="b" style="left:25px;top:180px;width:1px;height:15px;background:#d4d4d4"></div><div class="b" style="left:25px;top:195px;width:1px;height:358px;background:#b0b0b0"></div><div class="b" style="left:89px;top:180px;width:1px;height:15px;background:#d4d4d4"></div><div class="b" style="left:89px;top:195px;width:1px;height:358px;background:#e1e1e1"></div><div class="b" style="left:191px;top:180px;width:1px;height:15px;background:#d4d4d4"></div><div class="b" style="left:191px;top:195px;width:1px;height:358px;background:#e1e1e1"></div><div class="b" style="left:319px;top:180px;width:1px;height:15px;background:#d4d4d4"></div><div class="b" style="left:319px;top:195px;width:1px;height:358px;background:#e1e1e1"></div><div class="b" style="left:383px;top:180px;width:1px;height:15px;background:#d4d4d4"></div><div class="b" style="left:383px;top:195px;width:1px;height:358px;background:#e1e1e1"></div><div class="b" style="left:439px;top:180px;width:1px;height:15px;background:#d4d4d4"></div><div class="b" style="left:439px;top:195px;width:1px;height:358px;background:#e1e1e1"></div><div class="b" style="left:503px;top:180px;width:1px;height:15px;background:#d4d4d4"></div><div class="b" style="left:503px;top:195px;width:1px;height:358px;background:#e1e1e1"></div><div class="b" style="left:574px;top:180px;width:1px;height:15px;background:#d4d4d4"></div><div class="b" style="left:574px;top:195px;width:1px;height:358px;background:#e1e1e1"></div><div class="b" style="left:645px;top:180px;width:1px;height:15px;background:#d4d4d4"></div><div class="b" style="left:645px;top:195px;width:1px;height:358px;background:#e1e1e1"></div><div class="b" style="left:733px;top:180px;width:1px;height:15px;background:#d4d4d4"></div><div class="b" style="left:733px;top:195px;width:1px;height:358px;background:#e1e1e1"></div><div class="b" style="left:776px;top:180px;width:1px;height:15px;background:#d4d4d4"></div><div class="b" style="left:776px;top:195px;width:1px;height:358px;background:#e1e1e1"></div><div class="b" style="left:943px;top:180px;width:1px;height:15px;background:#d4d4d4"></div><div class="b" style="left:943px;top:195px;width:1px;height:358px;background:#e1e1e1"></div><div class="b" style="left:1055px;top:180px;width:1px;height:15px;background:#d4d4d4"></div><div class="b" style="left:1055px;top:195px;width:1px;height:358px;background:#e1e1e1"></div><div class="b" style="left:1225px;top:180px;width:1px;height:15px;background:#d4d4d4"></div><div class="b" style="left:1225px;top:195px;width:1px;height:358px;background:#e1e1e1"></div><div class="b" style="left:1323px;top:180px;width:1px;height:15px;background:#d4d4d4"></div><div class="b" style="left:1323px;top:195px;width:1px;height:358px;background:#e1e1e1"></div><div class="b" style="left:1494px;top:180px;width:1px;height:15px;background:#d4d4d4"></div><div class="b" style="left:1494px;top:195px;width:1px;height:358px;background:#e1e1e1"></div><div class="b" style="left:1668px;top:180px;width:1px;height:15px;background:#d4d4d4"></div><div class="b" style="left:1668px;top:195px;width:1px;height:358px;background:#e1e1e1"></div><div class="b" style="left:1855px;top:180px;width:1px;height:15px;background:#d4d4d4"></div><div class="b" style="left:1855px;top:195px;width:1px;height:358px;background:#e1e1e1"></div><div class="b" style="left:1935px;top:180px;width:1px;height:15px;background:#d4d4d4"></div><div class="b" style="left:1935px;top:195px;width:1px;height:358px;background:#e1e1e1"></div><div class="b" style="left:2039px;top:180px;width:1px;height:15px;background:#d4d4d4"></div><div class="b" style="left:2039px;top:195px;width:1px;height:358px;background:#e1e1e1"></div><div class="b" style="left:2226px;top:180px;width:1px;height:15px;background:#d4d4d4"></div><div class="b" style="left:2226px;top:195px;width:1px;height:358px;background:#e1e1e1"></div><div class="b" style="left:2443px;top:180px;width:1px;height:15px;background:#d4d4d4"></div><div class="b" style="left:2443px;top:195px;width:1px;height:358px;background:#e1e1e1"></div><div class="b" style="left:2552px;top:180px;width:1px;height:15px;background:#d4d4d4"></div><div class="b" style="left:2552px;top:195px;width:1px;height:358px;background:#e1e1e1"></div><div class="b" style="left:2661px;top:180px;width:1px;height:15px;background:#d4d4d4"></div><div class="b" style="left:2661px;top:195px;width:1px;height:358px;background:#e1e1e1"></div><div class="b" style="left:2742px;top:180px;width:1px;height:15px;background:#d4d4d4"></div><div class="b" style="left:2742px;top:195px;width:1px;height:358px;background:#e1e1e1"></div><div class="b" style="left:2881px;top:180px;width:1px;height:15px;background:#d4d4d4"></div><div class="b" style="left:2881px;top:195px;width:1px;height:358px;background:#e1e1e1"></div><div class="b" style="left:2993px;top:180px;width:1px;height:15px;background:#d4d4d4"></div><div class="b" style="left:2993px;top:195px;width:1px;height:358px;background:#e1e1e1"></div><div class="b" style="left:3085px;top:180px;width:1px;height:15px;background:#d4d4d4"></div><div class="b" style="left:3085px;top:195px;width:1px;height:358px;background:#e1e1e1"></div><div class="b" style="left:3200px;top:180px;width:1px;height:15px;background:#d4d4d4"></div><div class="b" style="left:3200px;top:195px;width:1px;height:358px;background:#e1e1e1"></div><div class="b" style="left:3264px;top:180px;width:1px;height:15px;background:#d4d4d4"></div><div class="b" style="left:3264px;top:195px;width:1px;height:358px;background:#e1e1e1"></div><div class="b" style="left:3328px;top:180px;width:1px;height:15px;background:#d4d4d4"></div><div class="b" style="left:3328px;top:195px;width:1px;height:358px;background:#e1e1e1"></div><div class="b" style="left:3392px;top:180px;width:1px;height:15px;background:#d4d4d4"></div><div class="b" style="left:3392px;top:195px;width:1px;height:358px;background:#e1e1e1"></div><div class="b" style="left:0px;top:195px;width:3418px;height:1px;background:#b0b0b0"></div><div class="b" style="left:1055px;top:194px;width:171px;height:2px;background:#107c41"></div><div class="b" style="left:24px;top:433px;width:2px;height:18px;background:#107c41"></div><div class="t c" style="left:25px;width:64px;top:180px;font-size:13px;line-height:15px;color:#424242;overflow:hidden">A</div><div class="t c" style="left:89px;width:102px;top:180px;font-size:13px;line-height:15px;color:#424242;overflow:hidden">B</div><div class="t c" style="left:191px;width:128px;top:180px;font-size:13px;line-height:15px;color:#424242;overflow:hidden">C</div><div class="t c" style="left:319px;width:64px;top:180px;font-size:13px;line-height:15px;color:#424242;overflow:hidden">D</div><div class="t c" style="left:383px;width:56px;top:180px;font-size:13px;line-height:15px;color:#424242;overflow:hidden">E</div><div class="t c" style="left:439px;width:64px;top:180px;font-size:13px;line-height:15px;color:#424242;overflow:hidden">F</div><div class="t c" style="left:503px;width:71px;top:180px;font-size:13px;line-height:15px;color:#424242;overflow:hidden">G</div><div class="t c" style="left:574px;width:71px;top:180px;font-size:13px;line-height:15px;color:#424242;overflow:hidden">H</div><div class="t c" style="left:645px;width:88px;top:180px;font-size:13px;line-height:15px;color:#424242;overflow:hidden">I</div><div class="t c" style="left:733px;width:43px;top:180px;font-size:13px;line-height:15px;color:#424242;overflow:hidden">J</div><div class="t c" style="left:776px;width:167px;top:180px;font-size:13px;line-height:15px;color:#424242;overflow:hidden">K</div><div class="t c" style="left:943px;width:112px;top:180px;font-size:13px;line-height:15px;color:#424242;overflow:hidden">L</div><div class="t c" style="left:1055px;width:170px;top:180px;font-size:13px;line-height:15px;color:#0e6b38;overflow:hidden">M</div><div class="t c" style="left:1225px;width:98px;top:180px;font-size:13px;line-height:15px;color:#424242;overflow:hidden">N</div><div class="t c" style="left:1323px;width:171px;top:180px;font-size:13px;line-height:15px;color:#424242;overflow:hidden">O</div><div class="t c" style="left:1494px;width:174px;top:180px;font-size:13px;line-height:15px;color:#424242;overflow:hidden">P</div><div class="t c" style="left:1668px;width:187px;top:180px;font-size:13px;line-height:15px;color:#424242;overflow:hidden">Q</div><div class="t c" style="left:1855px;width:80px;top:180px;font-size:13px;line-height:15px;color:#424242;overflow:hidden">R</div><div class="t c" style="left:1935px;width:104px;top:180px;font-size:13px;line-height:15px;color:#424242;overflow:hidden">S</div><div class="t c" style="left:2039px;width:187px;top:180px;font-size:13px;line-height:15px;color:#424242;overflow:hidden">T</div><div class="t c" style="left:2226px;width:217px;top:180px;font-size:13px;line-height:15px;color:#424242;overflow:hidden">U</div><div class="t c" style="left:2443px;width:109px;top:180px;font-size:13px;line-height:15px;color:#424242;overflow:hidden">V</div><div class="t c" style="left:2552px;width:109px;top:180px;font-size:13px;line-height:15px;color:#424242;overflow:hidden">W</div><div class="t c" style="left:2661px;width:81px;top:180px;font-size:13px;line-height:15px;color:#424242;overflow:hidden">X</div><div class="t c" style="left:2742px;width:139px;top:180px;font-size:13px;line-height:15px;color:#424242;overflow:hidden">Y</div><div class="t c" style="left:2881px;width:112px;top:180px;font-size:13px;line-height:15px;color:#424242;overflow:hidden">Z</div><div class="t c" style="left:2993px;width:92px;top:180px;font-size:13px;line-height:15px;color:#424242;overflow:hidden">AA</div><div class="t c" style="left:3085px;width:115px;top:180px;font-size:13px;line-height:15px;color:#424242;overflow:hidden">AB</div><div class="t c" style="left:3200px;width:64px;top:180px;font-size:13px;line-height:15px;color:#424242;overflow:hidden">AC</div><div class="t c" style="left:3264px;width:64px;top:180px;font-size:13px;line-height:15px;color:#424242;overflow:hidden">AD</div><div class="t c" style="left:3328px;width:64px;top:180px;font-size:13px;line-height:15px;color:#424242;overflow:hidden">AE</div><div class="b" style="left:3393px;top:179px;width:25px;height:15px;overflow:hidden"><div class="t c" style="left:0px;width:64px;top:1px;font-size:13px;line-height:15px;color:#424242">AF</div></div><div class="t c" style="left:1px;width:25px;top:196px;font-size:13px;line-height:17px;color:#424242">1</div><div class="t c" style="left:1px;width:25px;top:213px;font-size:13px;line-height:17px;color:#424242">2</div><div class="t c" style="left:1px;width:25px;top:230px;font-size:13px;line-height:17px;color:#424242">3</div><div class="t c" style="left:1px;width:25px;top:247px;font-size:13px;line-height:17px;color:#424242">4</div><div class="t c" style="left:1px;width:25px;top:264px;font-size:13px;line-height:17px;color:#424242">5</div><div class="t c" style="left:1px;width:25px;top:281px;font-size:13px;line-height:17px;color:#424242">6</div><div class="t c" style="left:1px;width:25px;top:298px;font-size:13px;line-height:17px;color:#424242">7</div><div class="t c" style="left:1px;width:25px;top:315px;font-size:13px;line-height:17px;color:#424242">8</div><div class="t c" style="left:1px;width:25px;top:332px;font-size:13px;line-height:17px;color:#424242">9</div><div class="t c" style="left:1px;width:25px;top:349px;font-size:13px;line-height:17px;color:#424242">10</div><div class="t c" style="left:1px;width:25px;top:366px;font-size:13px;line-height:17px;color:#424242">11</div><div class="t c" style="left:1px;width:25px;top:383px;font-size:13px;line-height:17px;color:#424242">12</div><div class="t c" style="left:1px;width:25px;top:400px;font-size:13px;line-height:17px;color:#424242">13</div><div class="t c" style="left:1px;width:25px;top:417px;font-size:13px;line-height:17px;color:#424242">14</div><div class="t c" style="left:1px;width:25px;top:434px;font-size:13px;line-height:17px;color:#0e6b38">15</div><div class="t c" style="left:1px;width:25px;top:451px;font-size:13px;line-height:17px;color:#424242">16</div><div class="t c" style="left:1px;width:25px;top:468px;font-size:13px;line-height:17px;color:#424242">17</div><div class="t c" style="left:1px;width:25px;top:485px;font-size:13px;line-height:17px;color:#424242">18</div><div class="t c" style="left:1px;width:25px;top:502px;font-size:13px;line-height:17px;color:#424242">19</div><div class="t c" style="left:1px;width:25px;top:519px;font-size:13px;line-height:17px;color:#424242">20</div><div class="t c" style="left:1px;width:25px;top:536px;font-size:13px;line-height:17px;color:#424242">21</div><div class="cl" style="left:26px;width:63px;top:196px"><span>TuoteID</span></div><div class="cl" style="left:90px;width:101px;top:196px"><span>Tuoteryhma</span></div><div class="cl" style="left:192px;width:127px;top:196px"><span>Tuotenimi</span></div><div class="cl" style="left:320px;width:63px;top:196px"><span>Tilaustyyppi</span></div><div class="cl" style="left:384px;width:55px;top:196px"><span>TilausID</span></div><div class="cl" style="left:440px;width:63px;top:196px"><span>Tilausnumero</span></div><div class="cl" style="left:504px;width:70px;top:196px"><span>Alkupaiva</span></div><div class="cl" style="left:575px;width:70px;top:196px"><span>Loppupaiva</span></div><div class="cl" style="left:646px;width:87px;top:196px"><span>Peruutuspaiva</span></div><div class="cl" style="left:734px;width:42px;top:196px"><span>Maara</span></div><div class="cl" style="left:777px;width:166px;top:196px"><span>TilauksenVerollinenSumma</span></div><div class="cl" style="left:944px;width:111px;top:196px"><span>Kampanjatunniste</span></div><div class="cl" style="left:1056px;width:169px;top:196px"><span>KatkaisunSyy</span></div><div class="cl" style="left:1226px;width:97px;top:196px"><span>Asiakasnumero</span></div><div class="cl" style="left:1324px;width:170px;top:196px"><span>Sukunimi</span></div><div class="cl" style="left:1495px;width:173px;top:196px"><span>Etunimi</span></div><div class="cl" style="left:1669px;width:186px;top:196px"><span>Osoite</span></div><div class="cl" style="left:1856px;width:79px;top:196px"><span>Postinumero</span></div><div class="cl" style="left:1936px;width:103px;top:196px"><span>Postitoimipaikka</span></div><div class="cl" style="left:2040px;width:186px;top:196px"><span>Puhelin</span></div><div class="cl" style="left:2227px;width:216px;top:196px"><span>Sahkoposti</span></div><div class="cl" style="left:2444px;width:108px;top:196px"><span>Markkinointikielto</span></div><div class="cl" style="left:2553px;width:108px;top:196px"><span>MAsiakasnumero</span></div><div class="cl" style="left:2662px;width:80px;top:196px"><span>MSukunimi</span></div><div class="cl" style="left:2743px;width:138px;top:196px"><span>MEtunimi</span></div><div class="cl" style="left:2882px;width:111px;top:196px"><span>MOsoite</span></div><div class="cl" style="left:2994px;width:91px;top:196px"><span>MPostinumero</span></div><div class="cl" style="left:3086px;width:114px;top:196px"><span>MPostitoimipaikka</span></div><div class="cl" style="left:3201px;width:63px;top:196px"><span>MPuhelin</span></div><div class="cl" style="left:3265px;width:63px;top:196px"><span>MSahkoposti</span></div><div class="cl" style="left:3329px;width:89px;top:196px"><span>MMarkkinointikielto</span></div><div class="cl r" style="left:26px;width:60px;top:213px">2545</div><div class="cl" style="left:90px;width:101px;top:213px"><span>TaikaNakka Digi</span></div><div class="cl" style="left:192px;width:127px;top:213px"><span>Määräaikainen, digi</span></div><div class="cl" style="left:320px;width:63px;top:213px"><span>2</span></div><svg class="s" style="left:320px;top:213px" width="6" height="6" viewBox="0 0 6 6"><path d="M0 0h6L0 6z" fill="#107c41"/></svg><div class="cl r" style="left:384px;width:52px;top:213px">1838607</div><div class="cl r" style="left:440px;width:60px;top:213px">1838607</div><div class="cl" style="left:504px;width:70px;top:213px"><span>31.03.2025</span></div><div class="cl" style="left:575px;width:158px;top:213px"><span>31.03.2026</span></div><div class="cl r" style="left:734px;width:39px;top:213px">1</div><div class="cl r" style="left:777px;width:163px;top:213px">49.5</div><div class="cl r" style="left:1226px;width:94px;top:213px">24019</div><div class="cl" style="left:1324px;width:170px;top:213px"><span>Aura Brandenburg OY</span></div><div class="cl" style="left:1495px;width:173px;top:213px"><span>Laskutus Brandenburg Aura</span></div><div class="cl" style="left:1669px;width:186px;top:213px"><span>Lokkikuja 9 C 33</span></div><div class="cl" style="left:1856px;width:79px;top:213px"><span>02430</span></div><svg class="s" style="left:1856px;top:213px" width="6" height="6" viewBox="0 0 6 6"><path d="M0 0h6L0 6z" fill="#107c41"/></svg><div class="cl" style="left:1936px;width:103px;top:213px"><span>MASALA</span></div><div class="cl" style="left:2040px;width:186px;top:213px"><span>0400-4516252368</span></div><div class="cl" style="left:2227px;width:216px;top:213px"><span> aura.brandenburg@taikatilaus.fi</span></div><div class="cl" style="left:2444px;width:974px;top:213px"><span>E</span></div><div class="cl r" style="left:26px;width:60px;top:230px">2545</div><div class="cl" style="left:90px;width:101px;top:230px"><span>TaikaNakka Digi</span></div><div class="cl" style="left:192px;width:127px;top:230px"><span>Määräaikainen, digi</span></div><div class="cl" style="left:320px;width:63px;top:230px"><span>2</span></div><svg class="s" style="left:320px;top:230px" width="6" height="6" viewBox="0 0 6 6"><path d="M0 0h6L0 6z" fill="#107c41"/></svg><div class="cl r" style="left:384px;width:52px;top:230px">1838438</div><div class="cl r" style="left:440px;width:60px;top:230px">1838438</div><div class="cl" style="left:504px;width:70px;top:230px"><span>30.03.2025</span></div><div class="cl" style="left:575px;width:158px;top:230px"><span>30.03.2026</span></div><div class="cl r" style="left:734px;width:39px;top:230px">1</div><div class="cl r" style="left:777px;width:163px;top:230px">49.5</div><div class="cl r" style="left:1226px;width:94px;top:230px">23418</div><div class="cl" style="left:1324px;width:170px;top:230px"><span>Hane</span></div><div class="cl" style="left:1495px;width:173px;top:230px"><span>Evita</span></div><div class="cl" style="left:1669px;width:186px;top:230px"><span>Killingholmankuja 18 B 12</span></div><div class="cl" style="left:1856px;width:79px;top:230px"><span>76620</span></div><svg class="s" style="left:1856px;top:230px" width="6" height="6" viewBox="0 0 6 6"><path d="M0 0h6L0 6z" fill="#107c41"/></svg><div class="cl" style="left:1936px;width:103px;top:230px"><span>PYHITTY</span></div><div class="cl" style="left:2040px;width:186px;top:230px"><span>040-435823</span></div><div class="cl" style="left:2227px;width:216px;top:230px"><span>evita.hane@taikatilaus.fi</span></div><div class="cl" style="left:2444px;width:974px;top:230px"><span>E</span></div><div class="cl r" style="left:26px;width:60px;top:247px">2546</div><div class="cl" style="left:90px;width:101px;top:247px"><span>TaikaNakka</span></div><div class="cl" style="left:192px;width:127px;top:247px"><span>Määräaikainen tilaus</span></div><div class="cl" style="left:320px;width:63px;top:247px"><span>2</span></div><svg class="s" style="left:320px;top:247px" width="6" height="6" viewBox="0 0 6 6"><path d="M0 0h6L0 6z" fill="#107c41"/></svg><div class="cl r" style="left:384px;width:52px;top:247px">1838237</div><div class="cl r" style="left:440px;width:60px;top:247px">1838237</div><div class="cl" style="left:504px;width:70px;top:247px"><span>30.03.2025</span></div><div class="cl" style="left:575px;width:158px;top:247px"><span>30.03.2026</span></div><div class="cl r" style="left:734px;width:39px;top:247px">1</div><div class="cl r" style="left:777px;width:163px;top:247px">60.5</div><div class="cl r" style="left:1226px;width:94px;top:247px">24177</div><div class="cl" style="left:1324px;width:170px;top:247px"><span>Asta Rustholkarhu OY</span></div><div class="cl" style="left:1495px;width:173px;top:247px"><span>Laskutus Rustholkarhu Asta</span></div><div class="cl" style="left:1669px;width:186px;top:247px"><span>Kokkosaarenpolku 3 C 10</span></div><div class="cl" style="left:1856px;width:79px;top:247px"><span>98904</span></div><svg class="s" style="left:1856px;top:247px" width="6" height="6" viewBox="0 0 6 6"><path d="M0 0h6L0 6z" fill="#107c41"/></svg><div class="cl" style="left:1936px;width:103px;top:247px"><span>SMARTPOST</span></div><div class="cl" style="left:2040px;width:403px;top:247px"><span>+358-40-23459955</span></div><div class="cl" style="left:2444px;width:974px;top:247px"><span>E</span></div><div class="cl r" style="left:26px;width:60px;top:264px">2545</div><div class="cl" style="left:90px;width:101px;top:264px"><span>TaikaNakka Digi</span></div><div class="cl" style="left:192px;width:127px;top:264px"><span>Määräaikainen, digi</span></div><div class="cl" style="left:320px;width:63px;top:264px"><span>2</span></div><svg class="s" style="left:320px;top:264px" width="6" height="6" viewBox="0 0 6 6"><path d="M0 0h6L0 6z" fill="#107c41"/></svg><div class="cl r" style="left:384px;width:52px;top:264px">1838246</div><div class="cl r" style="left:440px;width:60px;top:264px">1838246</div><div class="cl" style="left:504px;width:70px;top:264px"><span>28.03.2025</span></div><div class="cl" style="left:575px;width:158px;top:264px"><span>28.03.2026</span></div><div class="cl r" style="left:734px;width:39px;top:264px">1</div><div class="cl r" style="left:777px;width:163px;top:264px">49.5</div><div class="cl r" style="left:1226px;width:94px;top:264px">24400</div><div class="cl" style="left:1324px;width:170px;top:264px"><span>Mia-Mari Svart OY</span></div><div class="cl" style="left:1495px;width:173px;top:264px"><span>Laskutus Svart Mia-Mari</span></div><div class="cl" style="left:1669px;width:186px;top:264px"><span>Eljaksentie 18 B</span></div><div class="cl" style="left:1856px;width:79px;top:264px"><span>61980</span></div><svg class="s" style="left:1856px;top:264px" width="6" height="6" viewBox="0 0 6 6"><path d="M0 0h6L0 6z" fill="#107c41"/></svg><div class="cl" style="left:1936px;width:103px;top:264px"><span>PÄNTÄNE</span></div><div class="cl" style="left:2040px;width:186px;top:264px"><span>+35840285426</span></div><svg class="s" style="left:2040px;top:264px" width="6" height="6" viewBox="0 0 6 6"><path d="M0 0h6L0 6z" fill="#107c41"/></svg><div class="cl" style="left:2227px;width:216px;top:264px"><span>mia-mari.svart@taikatilaus.fi</span></div><div class="cl" style="left:2444px;width:974px;top:264px"><span>E</span></div><div class="cl r" style="left:26px;width:60px;top:281px">2545</div><div class="cl" style="left:90px;width:101px;top:281px"><span>TaikaNakka Digi</span></div><div class="cl" style="left:192px;width:127px;top:281px"><span>Määräaikainen, digi</span></div><div class="cl" style="left:320px;width:63px;top:281px"><span>2</span></div><svg class="s" style="left:320px;top:281px" width="6" height="6" viewBox="0 0 6 6"><path d="M0 0h6L0 6z" fill="#107c41"/></svg><div class="cl r" style="left:384px;width:52px;top:281px">1838174</div><div class="cl r" style="left:440px;width:60px;top:281px">1838174</div><div class="cl" style="left:504px;width:70px;top:281px"><span>28.03.2025</span></div><div class="cl" style="left:575px;width:158px;top:281px"><span>28.03.2026</span></div><div class="cl r" style="left:734px;width:39px;top:281px">1</div><div class="cl r" style="left:777px;width:163px;top:281px">49.5</div><div class="cl r" style="left:1226px;width:94px;top:281px">24059</div><div class="cl" style="left:1324px;width:170px;top:281px"><span>Saalismaa OY</span></div><div class="cl" style="left:1495px;width:173px;top:281px"><span>Saalismaa Taija</span></div><div class="cl" style="left:1669px;width:266px;top:281px"><span>Lyhtytie 5 C 6</span></div><div class="cl" style="left:1936px;width:103px;top:281px"><span>RAUTAVAARA</span></div><div class="cl" style="left:2040px;width:403px;top:281px"><span>0400-9156419</span></div><div class="cl" style="left:2444px;width:974px;top:281px"><span>E</span></div><div class="cl r" style="left:26px;width:60px;top:298px">2546</div><div class="cl" style="left:90px;width:101px;top:298px"><span>TaikaNakka</span></div><div class="cl" style="left:192px;width:127px;top:298px"><span>Määräaikainen tilaus</span></div><div class="cl" style="left:320px;width:63px;top:298px"><span>2</span></div><svg class="s" style="left:320px;top:298px" width="6" height="6" viewBox="0 0 6 6"><path d="M0 0h6L0 6z" fill="#107c41"/></svg><div class="cl r" style="left:384px;width:52px;top:298px">1838394</div><div class="cl r" style="left:440px;width:60px;top:298px">1838394</div><div class="cl" style="left:504px;width:70px;top:298px"><span>27.03.2025</span></div><div class="cl" style="left:575px;width:158px;top:298px"><span>27.03.2026</span></div><div class="cl r" style="left:734px;width:39px;top:298px">1</div><div class="cl r" style="left:777px;width:163px;top:298px">60.5</div><div class="cl r" style="left:1226px;width:94px;top:298px">24352</div><div class="cl" style="left:1324px;width:170px;top:298px"><span>Matias West OY</span></div><div class="cl" style="left:1495px;width:173px;top:298px"><span>West Matias</span></div><div class="cl" style="left:1669px;width:186px;top:298px"><span>Rörstrandinkatu 3 A 33</span></div><div class="cl" style="left:1856px;width:79px;top:298px"><span>73101</span></div><svg class="s" style="left:1856px;top:298px" width="6" height="6" viewBox="0 0 6 6"><path d="M0 0h6L0 6z" fill="#107c41"/></svg><div class="cl" style="left:1936px;width:103px;top:298px"><span>LAPINLAHTI</span></div><div class="cl" style="left:2040px;width:403px;top:298px"><span>+358401973555</span></div><svg class="s" style="left:2040px;top:298px" width="6" height="6" viewBox="0 0 6 6"><path d="M0 0h6L0 6z" fill="#107c41"/></svg><div class="cl" style="left:2444px;width:974px;top:298px"><span>E</span></div><div class="cl r" style="left:26px;width:60px;top:315px">2546</div><div class="cl" style="left:90px;width:101px;top:315px"><span>TaikaNakka</span></div><div class="cl" style="left:192px;width:127px;top:315px"><span>Määräaikainen tilaus</span></div><div class="cl" style="left:320px;width:63px;top:315px"><span>2</span></div><svg class="s" style="left:320px;top:315px" width="6" height="6" viewBox="0 0 6 6"><path d="M0 0h6L0 6z" fill="#107c41"/></svg><div class="cl r" style="left:384px;width:52px;top:315px">1838585</div><div class="cl r" style="left:440px;width:60px;top:315px">1838585</div><div class="cl" style="left:504px;width:70px;top:315px"><span>21.03.2025</span></div><div class="cl" style="left:575px;width:158px;top:315px"><span>21.03.2026</span></div><div class="cl r" style="left:734px;width:39px;top:315px">1</div><div class="cl r" style="left:777px;width:163px;top:315px">60.5</div><div class="cl" style="left:1056px;width:169px;top:315px"><span>Ei tietoa</span></div><div class="cl r" style="left:1226px;width:94px;top:315px">24248</div><div class="cl" style="left:1324px;width:170px;top:315px"><span>Sinikka Holappa OY</span></div><div class="cl" style="left:1495px;width:173px;top:315px"><span>Holappa Sinikka</span></div><div class="cl" style="left:1669px;width:186px;top:315px"><span>Vuorilahdentie 12 A 5</span></div><div class="cl" style="left:1856px;width:79px;top:315px"><span>85320</span></div><svg class="s" style="left:1856px;top:315px" width="6" height="6" viewBox="0 0 6 6"><path d="M0 0h6L0 6z" fill="#107c41"/></svg><div class="cl" style="left:1936px;width:103px;top:315px"><span>SIEVI</span></div><div class="cl" style="left:2040px;width:186px;top:315px"><span>040-152743</span></div><div class="cl" style="left:2227px;width:216px;top:315px"><span>sinikka.holappa@taikatilaus.fi</span></div><div class="cl" style="left:2444px;width:974px;top:315px"><span>E</span></div><div class="cl r" style="left:26px;width:60px;top:332px">2578</div><div class="cl" style="left:90px;width:101px;top:332px"><span>TaikaNakka Digi</span></div><div class="cl" style="left:192px;width:127px;top:332px"><span>Kestotilaus, digi</span></div><div class="cl" style="left:320px;width:63px;top:332px"><span>1</span></div><svg class="s" style="left:320px;top:332px" width="6" height="6" viewBox="0 0 6 6"><path d="M0 0h6L0 6z" fill="#107c41"/></svg><div class="cl r" style="left:384px;width:52px;top:332px">1838956</div><div class="cl r" style="left:440px;width:60px;top:332px">1838956</div><div class="cl" style="left:504px;width:70px;top:332px"><span>21.03.2025</span></div><div class="cl" style="left:575px;width:158px;top:332px"><span>21.03.2026</span></div><div class="cl r" style="left:734px;width:39px;top:332px">1</div><div class="cl r" style="left:777px;width:163px;top:332px">45.1</div><div class="cl" style="left:1056px;width:169px;top:332px"><span>Suuttumus muusta asiasta</span></div><div class="cl r" style="left:1226px;width:94px;top:332px">23714</div><div class="cl" style="left:1324px;width:170px;top:332px"><span>Kuiri</span></div><div class="cl" style="left:1495px;width:173px;top:332px"><span>Katriina</span></div><div class="cl" style="left:1669px;width:186px;top:332px"><span>Välikatu 2 E 41</span></div><div class="cl" style="left:1856px;width:79px;top:332px"><span>61560</span></div><svg class="s" style="left:1856px;top:332px" width="6" height="6" viewBox="0 0 6 6"><path d="M0 0h6L0 6z" fill="#107c41"/></svg><div class="cl" style="left:1936px;width:103px;top:332px"><span>ORISBERG</span></div><div class="cl" style="left:2040px;width:186px;top:332px"><span>+35840863833</span></div><svg class="s" style="left:2040px;top:332px" width="6" height="6" viewBox="0 0 6 6"><path d="M0 0h6L0 6z" fill="#107c41"/></svg><div class="cl" style="left:2227px;width:216px;top:332px"><span>katriina.kuiri@taikatilaus.fi</span></div><div class="cl" style="left:2444px;width:974px;top:332px"><span>E</span></div><div class="cl r" style="left:26px;width:60px;top:349px">2545</div><div class="cl" style="left:90px;width:101px;top:349px"><span>TaikaNakka Digi</span></div><div class="cl" style="left:192px;width:127px;top:349px"><span>Määräaikainen, digi</span></div><div class="cl" style="left:320px;width:63px;top:349px"><span>2</span></div><svg class="s" style="left:320px;top:349px" width="6" height="6" viewBox="0 0 6 6"><path d="M0 0h6L0 6z" fill="#107c41"/></svg><div class="cl r" style="left:384px;width:52px;top:349px">1838467</div><div class="cl r" style="left:440px;width:60px;top:349px">1838467</div><div class="cl" style="left:504px;width:70px;top:349px"><span>20.03.2025</span></div><div class="cl" style="left:575px;width:158px;top:349px"><span>20.03.2026</span></div><div class="cl r" style="left:734px;width:39px;top:349px">1</div><div class="cl r" style="left:777px;width:163px;top:349px">49.5</div><div class="cl r" style="left:1226px;width:94px;top:349px">24086</div><div class="cl" style="left:1324px;width:170px;top:349px"><span>Luhti</span></div><div class="cl" style="left:1495px;width:173px;top:349px"><span>Pälvi</span></div><div class="cl" style="left:1669px;width:186px;top:349px"><span>Tullikirjurinkuja 13 C 5</span></div><div class="cl" style="left:1856px;width:79px;top:349px"><span> 36430</span></div><svg class="s" style="left:1856px;top:349px" width="6" height="6" viewBox="0 0 6 6"><path d="M0 0h6L0 6z" fill="#107c41"/></svg><div class="cl" style="left:1936px;width:103px;top:349px"><span>SAHALAHTI</span></div><div class="cl" style="left:2040px;width:186px;top:349px"><span>   palvi.luhti@taikatilaus.fi</span></div><div class="cl" style="left:2227px;width:216px;top:349px"><span>palvi.luhti@taikatilaus.fi</span></div><div class="cl" style="left:2444px;width:974px;top:349px"><span>E</span></div><div class="cl r" style="left:26px;width:60px;top:366px">2545</div><div class="cl" style="left:90px;width:101px;top:366px"><span>TaikaNakka Digi</span></div><div class="cl" style="left:192px;width:127px;top:366px"><span>Määräaikainen, digi</span></div><div class="cl" style="left:320px;width:63px;top:366px"><span>2</span></div><svg class="s" style="left:320px;top:366px" width="6" height="6" viewBox="0 0 6 6"><path d="M0 0h6L0 6z" fill="#107c41"/></svg><div class="cl r" style="left:384px;width:52px;top:366px">1838080</div><div class="cl r" style="left:440px;width:60px;top:366px">1838080</div><div class="cl" style="left:504px;width:70px;top:366px"><span>19.03.2025</span></div><div class="cl" style="left:575px;width:158px;top:366px"><span>19.03.2026</span></div><div class="cl r" style="left:734px;width:39px;top:366px">1</div><div class="cl r" style="left:777px;width:163px;top:366px">49.5</div><div class="cl r" style="left:1226px;width:94px;top:366px">23581</div><div class="cl" style="left:1324px;width:170px;top:366px"><span>Liljaniemi</span></div><div class="cl" style="left:1495px;width:173px;top:366px"><span>Eeli</span></div><div class="cl" style="left:1669px;width:186px;top:366px"><span>Rannikkolaivurinkuja 15 C 22</span></div><div class="cl" style="left:1856px;width:79px;top:366px"><span>00594</span></div><svg class="s" style="left:1856px;top:366px" width="6" height="6" viewBox="0 0 6 6"><path d="M0 0h6L0 6z" fill="#107c41"/></svg><div class="cl" style="left:1936px;width:103px;top:366px"><span>SMARTPOST</span></div><div class="cl" style="left:2040px;width:186px;top:366px"><span>+3584032382245</span></div><svg class="s" style="left:2040px;top:366px" width="6" height="6" viewBox="0 0 6 6"><path d="M0 0h6L0 6z" fill="#107c41"/></svg><div class="cl" style="left:2227px;width:216px;top:366px"><span> eeli.liljaniemi@taikatilaus.fi</span></div><div class="cl" style="left:2444px;width:108px;top:366px"><span>E</span></div><div class="cl r" style="left:2553px;width:105px;top:366px">24053</div><div class="cl" style="left:2662px;width:80px;top:366px"><span>Jaskari</span></div><div class="cl" style="left:2743px;width:138px;top:366px"><span>Ykä</span></div><div class="cl" style="left:2882px;width:111px;top:366px"><span>Lamppukuja 10 G</span></div><div class="cl" style="left:2994px;width:91px;top:366px"><span>33471</span></div><svg class="s" style="left:2994px;top:366px" width="6" height="6" viewBox="0 0 6 6"><path d="M0 0h6L0 6z" fill="#107c41"/></svg><div class="cl" style="left:3086px;width:114px;top:366px"><span>YLÖJÄRVI</span></div><div class="cl" style="left:3201px;width:63px;top:366px"><span>040-93443</span></div><div class="cl" style="left:3265px;width:63px;top:366px"><span>yka.jaskari@taikatilaus.fi</span></div><div class="cl" style="left:3329px;width:89px;top:366px"><span>E</span></div><div class="cl r" style="left:26px;width:60px;top:383px">2545</div><div class="cl" style="left:90px;width:101px;top:383px"><span>TaikaNakka Digi</span></div><div class="cl" style="left:192px;width:127px;top:383px"><span>Määräaikainen, digi</span></div><div class="cl" style="left:320px;width:63px;top:383px"><span>2</span></div><svg class="s" style="left:320px;top:383px" width="6" height="6" viewBox="0 0 6 6"><path d="M0 0h6L0 6z" fill="#107c41"/></svg><div class="cl r" style="left:384px;width:52px;top:383px">1838146</div><div class="cl r" style="left:440px;width:60px;top:383px">1838146</div><div class="cl" style="left:504px;width:70px;top:383px"><span>17.03.2025</span></div><div class="cl" style="left:575px;width:158px;top:383px"><span>17.03.2026</span></div><div class="cl r" style="left:734px;width:39px;top:383px">1</div><div class="cl r" style="left:777px;width:163px;top:383px">49.5</div><div class="cl r" style="left:1226px;width:94px;top:383px">24098</div><div class="cl" style="left:1324px;width:170px;top:383px"><span>Merja Bäck OY</span></div><div class="cl" style="left:1495px;width:173px;top:383px"><span>Bäck Merja</span></div><div class="cl" style="left:1669px;width:186px;top:383px"><span>Kumpulanportti 18 D 22</span></div><div class="cl" style="left:1856px;width:79px;top:383px"><span>45154</span></div><svg class="s" style="left:1856px;top:383px" width="6" height="6" viewBox="0 0 6 6"><path d="M0 0h6L0 6z" fill="#107c41"/></svg><div class="cl" style="left:1936px;width:103px;top:383px"><span>SMARTPOST</span></div><div class="cl" style="left:2040px;width:403px;top:383px"><span>+358407521112</span></div><svg class="s" style="left:2040px;top:383px" width="6" height="6" viewBox="0 0 6 6"><path d="M0 0h6L0 6z" fill="#107c41"/></svg><div class="cl" style="left:2444px;width:974px;top:383px"><span>E</span></div><div class="cl r" style="left:26px;width:60px;top:400px">2546</div><div class="cl" style="left:90px;width:101px;top:400px"><span>TaikaNakka</span></div><div class="cl" style="left:192px;width:127px;top:400px"><span>Määräaikainen tilaus</span></div><div class="cl" style="left:320px;width:63px;top:400px"><span>2</span></div><svg class="s" style="left:320px;top:400px" width="6" height="6" viewBox="0 0 6 6"><path d="M0 0h6L0 6z" fill="#107c41"/></svg><div class="cl r" style="left:384px;width:52px;top:400px">1838575</div><div class="cl r" style="left:440px;width:60px;top:400px">1838575</div><div class="cl" style="left:504px;width:70px;top:400px"><span>14.03.2025</span></div><div class="cl" style="left:575px;width:158px;top:400px"><span>14.03.2026</span></div><div class="cl r" style="left:734px;width:39px;top:400px">1</div><div class="cl r" style="left:777px;width:163px;top:400px">60.5</div><div class="cl r" style="left:1226px;width:94px;top:400px">23655</div><div class="cl" style="left:1324px;width:170px;top:400px"><span>Oskari Hirvinen OY</span></div><div class="cl" style="left:1495px;width:173px;top:400px"><span>Myynti Hirvinen Oskari</span></div><div class="cl" style="left:1669px;width:186px;top:400px"><span>Purjeentekijänkuja;00440 18 B</span></div><div class="cl" style="left:1856px;width:79px;top:400px"><span>18100</span></div><svg class="s" style="left:1856px;top:400px" width="6" height="6" viewBox="0 0 6 6"><path d="M0 0h6L0 6z" fill="#107c41"/></svg><div class="cl" style="left:1936px;width:103px;top:400px"><span>Jyrkkä</span></div><div class="cl" style="left:2040px;width:186px;top:400px"><span>+35840512494</span></div><svg class="s" style="left:2040px;top:400px" width="6" height="6" viewBox="0 0 6 6"><path d="M0 0h6L0 6z" fill="#107c41"/></svg><div class="cl" style="left:2227px;width:216px;top:400px"><span>oskari.hirvinen@taikatilaus.fi</span></div><div class="cl" style="left:2444px;width:974px;top:400px"><span>E</span></div><div class="cl r" style="left:26px;width:60px;top:417px">2546</div><div class="cl" style="left:90px;width:101px;top:417px"><span>TaikaNakka</span></div><div class="cl" style="left:192px;width:127px;top:417px"><span>Määräaikainen tilaus</span></div><div class="cl" style="left:320px;width:63px;top:417px"><span>2</span></div><svg class="s" style="left:320px;top:417px" width="6" height="6" viewBox="0 0 6 6"><path d="M0 0h6L0 6z" fill="#107c41"/></svg><div class="cl r" style="left:384px;width:52px;top:417px">1838215</div><div class="cl r" style="left:440px;width:60px;top:417px">1838215</div><div class="cl" style="left:504px;width:70px;top:417px"><span>11.03.2025</span></div><div class="cl" style="left:575px;width:158px;top:417px"><span>11.03.2026</span></div><div class="cl r" style="left:734px;width:39px;top:417px">1</div><div class="cl r" style="left:777px;width:163px;top:417px">60.5</div><div class="cl r" style="left:1226px;width:94px;top:417px">24163</div><div class="cl" style="left:1324px;width:170px;top:417px"><span>Nissinen</span></div><div class="cl" style="left:1495px;width:173px;top:417px"><span>Tuija</span></div><div class="cl" style="left:1669px;width:186px;top:417px"><span>Revontulentie 18 G</span></div><div class="cl" style="left:1856px;width:79px;top:417px"><span>49901</span></div><svg class="s" style="left:1856px;top:417px" width="6" height="6" viewBox="0 0 6 6"><path d="M0 0h6L0 6z" fill="#107c41"/></svg><div class="cl" style="left:1936px;width:103px;top:417px"><span>VIROLAHTI</span></div><div class="cl" style="left:2040px;width:186px;top:417px"><span>040-2816623514</span></div><div class="cl" style="left:2227px;width:216px;top:417px"><span>tuija.nissinen@taikatilaus.fi</span></div><div class="cl" style="left:2444px;width:974px;top:417px"><span>E</span></div><div class="cl r" style="left:26px;width:60px;top:434px">2545</div><div class="cl" style="left:90px;width:101px;top:434px"><span>TaikaNakka Digi</span></div><div class="cl" style="left:192px;width:127px;top:434px"><span>Määräaikainen, digi</span></div><div class="cl" style="left:320px;width:63px;top:434px"><span>2</span></div><svg class="s" style="left:320px;top:434px" width="6" height="6" viewBox="0 0 6 6"><path d="M0 0h6L0 6z" fill="#107c41"/></svg><div class="cl r" style="left:384px;width:52px;top:434px">1838295</div><div class="cl r" style="left:440px;width:60px;top:434px">1838295</div><div class="cl" style="left:504px;width:70px;top:434px"><span>09.03.2025</span></div><div class="cl" style="left:575px;width:158px;top:434px"><span>09.03.2026</span></div><div class="cl r" style="left:734px;width:39px;top:434px">1</div><div class="cl r" style="left:777px;width:163px;top:434px">49.5</div><div class="cl r" style="left:1226px;width:94px;top:434px">24346</div><div class="cl" style="left:1324px;width:170px;top:434px"><span>Johannes Keski-Levijoki OY</span></div><div class="cl" style="left:1495px;width:173px;top:434px"><span>Keski-Levijoki Johannes</span></div><div class="cl" style="left:1669px;width:186px;top:434px"><span>Iso Koivusaari 17 G 33</span></div><div class="cl" style="left:1856px;width:79px;top:434px"><span>19700</span></div><svg class="s" style="left:1856px;top:434px" width="6" height="6" viewBox="0 0 6 6"><path d="M0 0h6L0 6z" fill="#107c41"/></svg><div class="cl" style="left:1936px;width:103px;top:434px"><span>SYSMÄ</span></div><div class="cl" style="left:2040px;width:403px;top:434px"><span>040-231517431</span></div><div class="cl" style="left:2444px;width:974px;top:434px"><span>E</span></div><div class="cl r" style="left:26px;width:60px;top:451px">2545</div><div class="cl" style="left:90px;width:101px;top:451px"><span>TaikaNakka Digi</span></div><div class="cl" style="left:192px;width:127px;top:451px"><span>Määräaikainen, digi</span></div><div class="cl" style="left:320px;width:63px;top:451px"><span>2</span></div><svg class="s" style="left:320px;top:451px" width="6" height="6" viewBox="0 0 6 6"><path d="M0 0h6L0 6z" fill="#107c41"/></svg><div class="cl r" style="left:384px;width:52px;top:451px">1838481</div><div class="cl r" style="left:440px;width:60px;top:451px">1838481</div><div class="cl" style="left:504px;width:70px;top:451px"><span>09.03.2025</span></div><div class="cl" style="left:575px;width:158px;top:451px"><span>09.03.2026</span></div><div class="cl r" style="left:734px;width:39px;top:451px">1</div><div class="cl r" style="left:777px;width:163px;top:451px">49.5</div><div class="cl r" style="left:1226px;width:94px;top:451px">23543</div><div class="cl" style="left:1324px;width:170px;top:451px"><span>Niklas Kajula OY</span></div><div class="cl" style="left:1495px;width:173px;top:451px"><span>Kajula Niklas</span></div><div class="cl" style="left:1669px;width:186px;top:451px"><span>Lähdepolku 9 C 33</span></div><div class="cl" style="left:1856px;width:79px;top:451px"><span>02744</span></div><svg class="s" style="left:1856px;top:451px" width="6" height="6" viewBox="0 0 6 6"><path d="M0 0h6L0 6z" fill="#107c41"/></svg><div class="cl" style="left:1936px;width:103px;top:451px"><span>SMARTPOST</span></div><div class="cl" style="left:2040px;width:186px;top:451px"><span>0400-4616252368</span></div><div class="cl" style="left:2227px;width:216px;top:451px"><span> niklas.kajula@taikatilaus.fi</span></div><div class="cl" style="left:2444px;width:108px;top:451px"><span>E</span></div><div class="cl r" style="left:2553px;width:105px;top:451px">23669</div><div class="cl" style="left:2662px;width:80px;top:451px"><span>Urpulahti OY</span></div><div class="cl" style="left:2743px;width:138px;top:451px"><span>Kehitys Urpulahti Oula</span></div><div class="cl" style="left:2882px;width:203px;top:451px"><span>Roomankatu 10 A</span></div><div class="cl" style="left:3086px;width:114px;top:451px"><span>TAMPERE</span></div><div class="cl" style="left:3201px;width:63px;top:451px"><span>    oula.urpulahti@taikatilaus.fi</span></div><div class="cl" style="left:3265px;width:63px;top:451px"><span>oula.urpulahti@taikatilaus.fi</span></div><div class="cl" style="left:3329px;width:89px;top:451px"><span>E</span></div><div class="cl r" style="left:26px;width:60px;top:468px">2545</div><div class="cl" style="left:90px;width:101px;top:468px"><span>TaikaNakka Digi</span></div><div class="cl" style="left:192px;width:127px;top:468px"><span>Määräaikainen, digi</span></div><div class="cl" style="left:320px;width:63px;top:468px"><span>2</span></div><svg class="s" style="left:320px;top:468px" width="6" height="6" viewBox="0 0 6 6"><path d="M0 0h6L0 6z" fill="#107c41"/></svg><div class="cl r" style="left:384px;width:52px;top:468px">1838552</div><div class="cl r" style="left:440px;width:60px;top:468px">1838552</div><div class="cl" style="left:504px;width:70px;top:468px"><span>04.03.2025</span></div><div class="cl" style="left:575px;width:158px;top:468px"><span>04.03.2026</span></div><div class="cl r" style="left:734px;width:39px;top:468px">1</div><div class="cl r" style="left:777px;width:163px;top:468px">49.5</div><div class="cl r" style="left:1226px;width:94px;top:468px">24007</div><div class="cl" style="left:1324px;width:170px;top:468px"><span>Seppänen OY</span></div><div class="cl" style="left:1495px;width:173px;top:468px"><span>Seppänen-Seppänen Irma</span></div><div class="cl" style="left:1669px;width:186px;top:468px"><span>Pistokas 9 G</span></div><div class="cl" style="left:1856px;width:79px;top:468px"><span>50504</span></div><svg class="s" style="left:1856px;top:468px" width="6" height="6" viewBox="0 0 6 6"><path d="M0 0h6L0 6z" fill="#107c41"/></svg><div class="cl" style="left:1936px;width:103px;top:468px"><span>SMARTPOST</span></div><div class="cl" style="left:2040px;width:186px;top:468px"><span>040-599232</span></div><div class="cl" style="left:2227px;width:216px;top:468px"><span>irma.seppanen@taikatilaus.fiÄÖÅÖ</span></div><div class="cl" style="left:2444px;width:974px;top:468px"><span>E</span></div><div class="cl r" style="left:26px;width:60px;top:485px">2545</div><div class="cl" style="left:90px;width:101px;top:485px"><span>TaikaNakka Digi</span></div><div class="cl" style="left:192px;width:127px;top:485px"><span>Määräaikainen, digi</span></div><div class="cl" style="left:320px;width:63px;top:485px"><span>2</span></div><svg class="s" style="left:320px;top:485px" width="6" height="6" viewBox="0 0 6 6"><path d="M0 0h6L0 6z" fill="#107c41"/></svg><div class="cl r" style="left:384px;width:52px;top:485px">1838153</div><div class="cl r" style="left:440px;width:60px;top:485px">1838153</div><div class="cl" style="left:504px;width:70px;top:485px"><span>04.03.2025</span></div><div class="cl" style="left:575px;width:158px;top:485px"><span>04.03.2026</span></div><div class="cl r" style="left:734px;width:39px;top:485px">1</div><div class="cl r" style="left:777px;width:163px;top:485px">49.5</div><div class="cl r" style="left:1226px;width:94px;top:485px">23912</div><div class="cl" style="left:1324px;width:170px;top:485px"><span>Riekkinen</span></div><div class="cl" style="left:1495px;width:173px;top:485px"><span>Sigrid</span></div><div class="cl" style="left:1669px;width:186px;top:485px"><span>Sisselenkuja 7 F 5</span></div><div class="cl" style="left:1856px;width:79px;top:485px"><span>99831</span></div><svg class="s" style="left:1856px;top:485px" width="6" height="6" viewBox="0 0 6 6"><path d="M0 0h6L0 6z" fill="#107c41"/></svg><div class="cl" style="left:1936px;width:103px;top:485px"><span>SAARISELKÄ</span></div><div class="cl" style="left:2040px;width:186px;top:485px"><span>040-69571296</span></div><div class="cl" style="left:2227px;width:216px;top:485px"><span>sigrid.riekkinen@taikatilaus.fi</span></div><div class="cl" style="left:2444px;width:974px;top:485px"><span>E</span></div><div class="cl r" style="left:26px;width:60px;top:502px">2546</div><div class="cl" style="left:90px;width:101px;top:502px"><span>TaikaNakka</span></div><div class="cl" style="left:192px;width:127px;top:502px"><span>Määräaikainen tilaus</span></div><div class="cl" style="left:320px;width:63px;top:502px"><span>2</span></div><svg class="s" style="left:320px;top:502px" width="6" height="6" viewBox="0 0 6 6"><path d="M0 0h6L0 6z" fill="#107c41"/></svg><div class="cl r" style="left:384px;width:52px;top:502px">1838201</div><div class="cl r" style="left:440px;width:60px;top:502px">1838201</div><div class="cl" style="left:504px;width:70px;top:502px"><span>03.03.2025</span></div><div class="cl" style="left:575px;width:158px;top:502px"><span>03.03.2026</span></div><div class="cl r" style="left:734px;width:39px;top:502px">1</div><div class="cl r" style="left:777px;width:163px;top:502px">60.5</div><div class="cl r" style="left:1226px;width:94px;top:502px">24145</div><div class="cl" style="left:1324px;width:170px;top:502px"><span>Koliseva</span></div><div class="cl" style="left:1495px;width:173px;top:502px"><span>Zehra</span></div><div class="cl" style="left:1669px;width:186px;top:502px"><span>Puistolan raitti 8 C 33</span></div><div class="cl" style="left:1856px;width:79px;top:502px"><span>97670</span></div><svg class="s" style="left:1856px;top:502px" width="6" height="6" viewBox="0 0 6 6"><path d="M0 0h6L0 6z" fill="#107c41"/></svg><div class="cl" style="left:1936px;width:103px;top:502px"><span>KIVITAIPALE</span></div><div class="cl" style="left:2040px;width:186px;top:502px"><span>   zehra.koliseva@taikatilaus.fi</span></div><div class="cl" style="left:2227px;width:216px;top:502px"><span>zehra.koliseva@taikatilaus.fi</span></div><div class="cl" style="left:2444px;width:974px;top:502px"><span>E</span></div><div class="cl r" style="left:26px;width:60px;top:519px">2546</div><div class="cl" style="left:90px;width:101px;top:519px"><span>TaikaNakka</span></div><div class="cl" style="left:192px;width:127px;top:519px"><span>Määräaikainen tilaus</span></div><div class="cl" style="left:320px;width:63px;top:519px"><span>2</span></div><svg class="s" style="left:320px;top:519px" width="6" height="6" viewBox="0 0 6 6"><path d="M0 0h6L0 6z" fill="#107c41"/></svg><div class="cl r" style="left:384px;width:52px;top:519px">1838513</div><div class="cl r" style="left:440px;width:60px;top:519px">1838513</div><div class="cl" style="left:504px;width:70px;top:519px"><span>02.03.2025</span></div><div class="cl" style="left:575px;width:70px;top:519px"><span>02.03.2026</span></div><div class="cl" style="left:646px;width:87px;top:519px"><span>01.03.2026</span></div><div class="cl r" style="left:734px;width:39px;top:519px">1</div><div class="cl r" style="left:777px;width:163px;top:519px">60.5</div><div class="cl" style="left:1056px;width:169px;top:519px"><span>Tyytymätön lehteen</span></div><div class="cl r" style="left:1226px;width:94px;top:519px">24175</div><div class="cl" style="left:1324px;width:170px;top:519px"><span>Andersson</span></div><div class="cl" style="left:1495px;width:173px;top:519px"><span>Minnea</span></div><div class="cl" style="left:1669px;width:186px;top:519px"><span>Tuohipolku 9 G 6</span></div><div class="cl" style="left:1856px;width:79px;top:519px"><span>02124</span></div><svg class="s" style="left:1856px;top:519px" width="6" height="6" viewBox="0 0 6 6"><path d="M0 0h6L0 6z" fill="#107c41"/></svg><div class="cl" style="left:1936px;width:103px;top:519px"><span>SMARTPOST</span></div><div class="cl" style="left:2040px;width:186px;top:519px"><span>040-7147218</span></div><div class="cl" style="left:2227px;width:216px;top:519px"><span>mateo.andersson@taikatilaus.fi</span></div><div class="cl" style="left:2444px;width:974px;top:519px"><span>E</span></div><div class="b" style="left:1054px;top:432px;width:173px;height:20px;border:2px solid #107c41;box-sizing:border-box"></div><div class="b" style="left:1222px;top:447px;width:7px;height:7px;background:#fff"></div><div class="b" style="left:1223px;top:448px;width:6px;height:6px;background:#107c41"></div>
</body></html>
